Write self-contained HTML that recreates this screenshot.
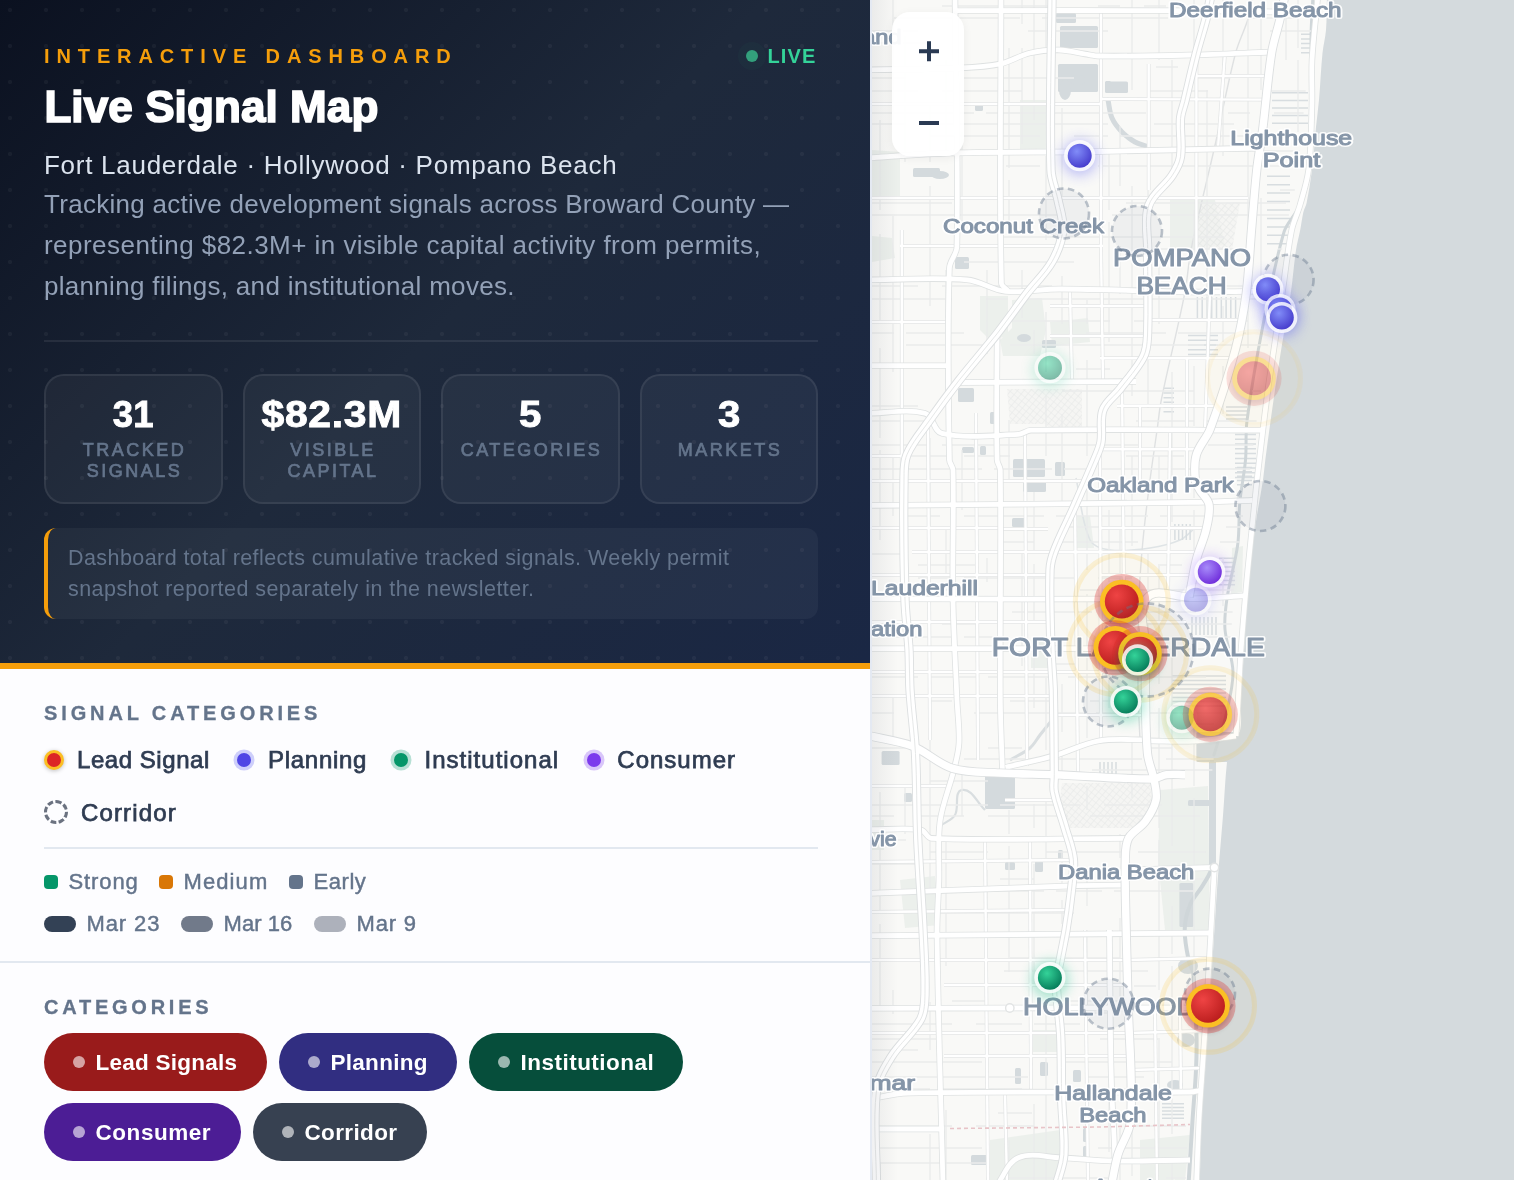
<!DOCTYPE html>
<html lang="en">
<head>
<meta charset="utf-8">
<title>Live Signal Map</title>
<style>
*{box-sizing:border-box;margin:0;padding:0}
html,body{width:1514px;height:1180px;overflow:hidden;background:#fff}
body{font-family:"Liberation Sans",sans-serif;position:relative;-webkit-font-smoothing:antialiased}
.abs{position:absolute;white-space:nowrap}
#hero{will-change:transform;position:absolute;left:0;top:0;width:870px;height:663px;background:linear-gradient(135deg,#0b1120 0%,#1e293b 50%,#1a2744 100%);overflow:hidden}
#hero .dots{position:absolute;inset:0;background-image:radial-gradient(circle,rgba(255,255,255,.045) 0,rgba(255,255,255,.045) 1.7px,transparent 2.5px);background-size:36px 36px;background-position:-8px -8px}
#bar{position:absolute;left:0;top:663px;width:870px;height:6px;background:#f59e0b}
#white{will-change:transform;position:absolute;left:0;top:669px;width:870px;height:511px;background:#fdfdff}
#sep{position:absolute;left:870px;top:0;width:2px;height:1180px;background:#e4e9f2}
#map{will-change:transform;position:absolute;left:872px;top:0;width:642px;height:1180px;background:#f8f8f6;overflow:hidden}

.eyebrow{left:44px;top:43px;font-size:20px;line-height:26px;font-weight:700;color:#f59e0b;letter-spacing:6.1px}
.live{left:767.5px;top:43px;font-size:20px;line-height:26px;font-weight:700;color:#34d399;letter-spacing:1.1px}
.livedot{position:absolute;left:746px;top:50px;width:12px;height:12px;border-radius:50%;background:#33a07c;box-shadow:0 0 0 8px rgba(52,211,153,.035)}
h1{left:44.4px;-webkit-text-stroke:1.7px #fff;top:81px;font-size:44px;line-height:52px;font-weight:700;color:#fff;letter-spacing:-1.6px}
.sub{left:44px;top:149px;font-size:26px;line-height:32px;color:#dbe3ee;letter-spacing:.2px}
.para{left:44px;font-size:26px;line-height:32px;color:#93a1b7;letter-spacing:.35px}
.hr1{position:absolute;left:44px;top:340px;width:774px;height:2px;background:rgba(255,255,255,.08)}
.card{position:absolute;top:374px;width:178.5px;height:129.5px;border-radius:20px;border:2px solid rgba(255,255,255,.075);background:rgba(255,255,255,.045);text-align:center}
.card b{display:block;margin-top:18px;font-size:36.5px;line-height:42px;font-weight:700;color:#fff;letter-spacing:.2px;-webkit-text-stroke:.9px #fff}
.card b i{display:inline-block;font-style:normal;transform-origin:50% 50%}
.card span{display:block;margin-top:3.5px;font-size:18px;line-height:21px;color:#64748b;font-weight:400;-webkit-text-stroke:.7px #64748b}
.card u{display:block;text-decoration:none;letter-spacing:2.5px;padding-left:2.5px}
.note{position:absolute;left:44px;top:528px;width:774px;height:91px;border-radius:12px;background:rgba(255,255,255,.045);border-left:4px solid #f59e0b;}
.note div{position:absolute;left:20px;font-size:21.5px;line-height:31px;color:#64748b;white-space:nowrap;letter-spacing:.25px}

.sec{font-size:20px;line-height:26px;font-weight:700;color:#64748b;-webkit-text-stroke:.3px #64748b;letter-spacing:4.6px}
.lg{font-size:24px;line-height:30px;font-weight:400;color:#2f3c52;-webkit-text-stroke:.75px #2f3c52;letter-spacing:.1px}
.dot{position:absolute;border-radius:50%}
.sm{-webkit-text-stroke:.45px #64748b;font-size:22px;line-height:28px;color:#64748b;font-weight:400;letter-spacing:.2px}
.sq{position:absolute;width:14px;height:14px;border-radius:4px;top:206px}
.dp{position:absolute;width:32px;height:16px;border-radius:8px;top:247px}
.hr2{position:absolute;left:44px;top:178px;width:774px;height:2px;background:#e2e8f0}
.hr3{position:absolute;left:0;top:292px;width:870px;height:2px;background:#e2e8f0}
.pill{position:absolute;height:58px;border-radius:29px;color:#fff;font-size:22.5px;font-weight:700;line-height:58px;white-space:nowrap}
.pill i{position:absolute;left:29px;top:23px;width:12px;height:12px;border-radius:50%;background:rgba(255,255,255,.6)}
.pill span{position:absolute;left:51.5px;top:.7px;letter-spacing:.1px}
</style>
</head>
<body>
<div id="hero"><div class="dots"></div>
  <div class="abs eyebrow" id="h_eye" style="letter-spacing:6.89px">INTERACTIVE DASHBOARD</div>
  <div class="livedot"></div><div class="abs live" id="h_live">LIVE</div>
  <h1 class="abs" id="h_title" style="letter-spacing:0.1px">Live Signal Map</h1>
  <div class="abs sub" id="h_sub" style="letter-spacing:0.73px">Fort Lauderdale · Hollywood · Pompano Beach</div>
  <div class="abs para" id="h_p1" style="letter-spacing:0.28px;top:188px">Tracking active development signals across Broward County —</div>
  <div class="abs para" id="h_p2" style="letter-spacing:0.46px;top:229px">representing $82.3M+ in visible capital activity from permits,</div>
  <div class="abs para" id="h_p3" style="letter-spacing:0.3px;top:270px">planning filings, and institutional moves.</div>
  <div class="hr1"></div>
  <div class="card" style="left:44px"><b><i id="n1">31</i></b><span><u id="c1a">TRACKED</u><u id="c1b">SIGNALS</u></span></div>
  <div class="card" style="left:242.5px"><b><i id="n2" style="transform:scaleX(1.12);letter-spacing:.6px">$82.3M</i></b><span><u id="c2a">VISIBLE</u><u id="c2b">CAPITAL</u></span></div>
  <div class="card" style="left:441px"><b><i id="n3" style="transform:scaleX(1.1)">5</i></b><span><u id="c3a">CATEGORIES</u></span></div>
  <div class="card" style="left:639.5px"><b><i id="n4" style="transform:scaleX(1.1)">3</i></b><span><u id="c4a">MARKETS</u></span></div>
  <div class="note"><div id="h_n1" style="letter-spacing:0.43px;top:15px">Dashboard total reflects cumulative tracked signals. Weekly permit</div><div id="h_n2" style="letter-spacing:0.44px;top:46px">snapshot reported separately in the newsletter.</div></div>
</div>
<div id="bar"></div>
<div id="white">

  <div class="abs sec" id="t_sigcat" style="letter-spacing:3.87px;left:44px;top:31px">SIGNAL CATEGORIES</div>
  <div class="dot" style="left:44px;top:81px;width:20px;height:20px;background:#dc2626;border:3px solid #fbbf24;box-shadow:0 1px 4px rgba(0,0,0,.25)"></div>
  <div class="abs lg" id="t_lead" style="letter-spacing:0.55px;left:77px;top:76px">Lead Signal</div>
  <div class="dot" style="left:237px;top:84px;width:14px;height:14px;background:#4f46e5;box-shadow:0 0 0 3.5px rgba(99,102,241,.3)"></div>
  <div class="abs lg" id="t_plan" style="letter-spacing:0.72px;left:268px;top:76px">Planning</div>
  <div class="dot" style="left:394px;top:84px;width:14px;height:14px;background:#059669;box-shadow:0 0 0 3.5px rgba(5,150,105,.28)"></div>
  <div class="abs lg" id="t_inst" style="letter-spacing:1.02px;left:424.5px;top:76px">Institutional</div>
  <div class="dot" style="left:587px;top:84px;width:14px;height:14px;background:#7c3aed;box-shadow:0 0 0 3.5px rgba(124,58,237,.28)"></div>
  <div class="abs lg" id="t_cons" style="letter-spacing:1px;left:617.3px;top:76px">Consumer</div>
  <div class="dot" style="left:44px;top:131px;width:24px;height:24px;border:3px dashed #6b7280;background:transparent"></div>
  <div class="abs lg" id="t_corr" style="letter-spacing:1.15px;left:81px;top:129px">Corridor</div>
  <div class="hr2"></div>
  <div class="sq" style="left:44px;background:#059669"></div><div class="abs sm" id="t_strong" style="letter-spacing:0.9px;left:68.5px;top:199px">Strong</div>
  <div class="sq" style="left:159px;background:#d97706"></div><div class="abs sm" id="t_medium" style="letter-spacing:1.1px;left:183.5px;top:199px">Medium</div>
  <div class="sq" style="left:289px;background:#64748b"></div><div class="abs sm" id="t_early" style="letter-spacing:0.55px;left:313.5px;top:199px">Early</div>
  <div class="dp" style="left:44px;background:#334155"></div><div class="abs sm" id="t_m23" style="letter-spacing:0.9px;left:86.5px;top:241px">Mar 23</div>
  <div class="dp" style="left:181px;background:#717a8a"></div><div class="abs sm" id="t_m16" style="letter-spacing:0.07px;left:223.5px;top:241px">Mar 16</div>
  <div class="dp" style="left:314px;background:#adb1bb"></div><div class="abs sm" id="t_m9" style="letter-spacing:0.8px;left:356.5px;top:241px">Mar 9</div>
  <div class="hr3"></div>
  <div class="abs sec" id="t_cat" style="letter-spacing:3.76px;left:44px;top:325px">CATEGORIES</div>
  <div class="pill" style="left:44px;top:364px;width:223px;background:#991b1b"><i></i><span id="p_lead" style="letter-spacing:0.24px">Lead Signals</span></div>
  <div class="pill" style="left:279px;top:364px;width:178px;background:#312e81"><i></i><span id="p_plan" style="letter-spacing:0.28px">Planning</span></div>
  <div class="pill" style="left:469px;top:364px;width:214px;background:#064e3b"><i></i><span id="p_inst" style="letter-spacing:0.48px">Institutional</span></div>
  <div class="pill" style="left:44px;top:434px;width:197px;background:#4c1d95"><i></i><span id="p_cons" style="letter-spacing:0.55px">Consumer</span></div>
  <div class="pill" style="left:253px;top:434px;width:174px;background:#374151"><i></i><span id="p_corr" style="letter-spacing:0.37px">Corridor</span></div>

</div>
<div id="sep"></div>
<div id="map">
<svg width="642" height="1180" viewBox="872 0 642 1180" style="position:absolute;left:0;top:0">
<defs>
<radialGradient id="gR" cx="35%" cy="32%" r="75%"><stop offset="0" stop-color="#ef4444"/><stop offset="1" stop-color="#b91c1c"/></radialGradient>
<radialGradient id="gP" cx="38%" cy="32%" r="75%"><stop offset="0" stop-color="#818cf8"/><stop offset="1" stop-color="#4338ca"/></radialGradient>
<radialGradient id="gG" cx="38%" cy="32%" r="75%"><stop offset="0" stop-color="#34d399"/><stop offset="1" stop-color="#047857"/></radialGradient>
<radialGradient id="gC" cx="38%" cy="32%" r="75%"><stop offset="0" stop-color="#a78bfa"/><stop offset="1" stop-color="#6d28d9"/></radialGradient>
<filter id="sh" x="-50%" y="-50%" width="200%" height="200%"><feGaussianBlur stdDeviation="3"/></filter>
<filter id="gl" x="-100%" y="-100%" width="300%" height="300%"><feGaussianBlur stdDeviation="7"/></filter>
<pattern id="apt" width="5" height="5" patternUnits="userSpaceOnUse" patternTransform="rotate(40)"><rect width="5" height="5" fill="#f3f3f1"/><path d="M0 0H5M0 0V5" stroke="#dddfe0" stroke-width="1.2"/></pattern>
</defs>
<rect x="872" y="0" width="642" height="1180" fill="#f9f9f7"/>
<path d="M1327 -5 C1326.7 6.7 1326.9 18.4 1326 30 C1325.4 37.7 1323.3 45.3 1322.5 53 C1320.9 68.6 1320.4 84.4 1319 100 C1318.2 109.0 1316.9 118.0 1316 127 C1314.6 141.3 1313.8 155.7 1312 170 C1310.6 181.1 1308.8 192.1 1306.6 203 C1306.0 206.1 1304.1 208.9 1303.4 212 C1302.0 217.9 1301.4 224.0 1300.2 230 C1298.9 236.7 1297.0 243.3 1296 250 C1293.8 264.5 1292.9 279.1 1290.7 293.6 C1287.5 314.8 1283.3 335.8 1280 357 C1276.6 378.2 1273.6 399.5 1270.6 420.7 C1268.7 433.8 1267.0 446.9 1265.3 460 C1264.4 466.7 1264.0 473.4 1263 480 C1260.8 494.6 1257.7 509.0 1255.7 523.6 C1252.8 544.7 1250.3 565.8 1248.3 587 C1246.3 608.2 1245.4 629.5 1244 650.7 C1242.9 667.1 1241.8 683.6 1241 700 C1240.4 710.7 1242.2 721.6 1239.8 732 C1238.7 736.8 1232.9 739.4 1231 744 C1228.6 749.7 1227.7 755.9 1227 762 C1225.0 780.3 1224.4 798.7 1222.9 817 C1221.2 838.2 1219.2 859.5 1217.6 880.7 C1216.4 897.1 1215.5 913.6 1214.4 930 C1213.0 951.2 1211.6 972.4 1210.2 993.6 C1208.8 1014.7 1207.4 1035.9 1206 1057 C1204.6 1078.2 1202.8 1099.4 1201.7 1120.7 C1200.6 1142.1 1200.3 1163.6 1199.6 1185 L1520 1185 L1520 -5Z" fill="#d4dadd"/>
<path d="M980 296 L1008 296 L1008 336 L990 340 L980 330Z" fill="#ecf0ec"/>
<path d="M1012 300 L1042 298 L1046 330 L1040 356 L1003 356 L1000 340 L1012 328Z" fill="#ecf0ec"/>
<path d="M1050 322 L1088 318 L1090 342 L1052 346Z" fill="#ecf0ec"/>
<path d="M872 236 L892 238 L895 258 L872 262Z" fill="#ecf0ec"/>
<path d="M1232 548 L1243 546 L1242 592 L1231 594Z" fill="#ecf0ec"/>
<path d="M1160 790 L1208 786 L1210 930 L1165 930 L1158 860Z" fill="#ecf0ec"/>
<path d="M1033 1030 L1058 1030 L1058 1052 L1033 1052Z" fill="#ecf0ec"/>
<path d="M872 820 L884 820 L884 850 L872 850Z" fill="#ecf0ec"/>
<path d="M900 880 L935 876 L940 925 L905 928Z" fill="#ecf0ec"/>
<path d="M1031 640 L1048 640 L1048 668 L1031 668Z" fill="#ecf0ec"/>
<path d="M1075 516 L1090 516 L1094 548 L1075 548Z" fill="#ecf0ec"/>
<path d="M1020 100 L1050 100 L1050 150 L1020 150Z" fill="#ecf0ec"/>
<path d="M872 150 L900 152 L900 200 L872 200Z" fill="#ecf0ec"/>
<path d="M1170 200 L1215 200 L1225 245 L1170 250Z" fill="#ecf0ec"/>
<path d="M990 1140 L1060 1130 L1060 1180 L990 1180Z" fill="#ecf0ec"/>
<path d="M1140 1140 L1190 1135 L1185 1180 L1140 1180Z" fill="#ecf0ec"/>
<rect x="1013" y="459" width="32" height="18" rx="1.5" fill="#d4dadd"/>
<rect x="1023" y="481" width="23" height="11" rx="1.5" fill="#d4dadd"/>
<rect x="1012" y="518" width="14" height="9" rx="1.5" fill="#d4dadd"/>
<rect x="1056" y="13" width="20" height="10" rx="1.5" fill="#d4dadd"/>
<rect x="1060" y="26" width="38" height="22" rx="1.5" fill="#d4dadd"/>
<rect x="1058" y="64" width="40" height="28" rx="1.5" fill="#d4dadd"/>
<rect x="1105" y="81.5" width="23" height="11.5" rx="1.5" fill="#d4dadd"/>
<rect x="985" y="775" width="30" height="34" rx="1.5" fill="#d4dadd"/>
<rect x="881.6" y="751" width="18" height="14" rx="1.5" fill="#d4dadd"/>
<rect x="904" y="793" width="8" height="9" rx="1.5" fill="#d4dadd"/>
<rect x="1196.4" y="732" width="44" height="30" rx="1.5" fill="#d4dadd"/>
<rect x="1188" y="800" width="22" height="6" rx="1.5" fill="#d4dadd"/>
<rect x="1179.4" y="883" width="14" height="44" rx="1.5" fill="#d4dadd"/>
<rect x="975" y="104" width="8" height="7" rx="1.5" fill="#d4dadd"/>
<rect x="981" y="63" width="8" height="5" rx="1.5" fill="#d4dadd"/>
<rect x="913" y="168" width="27" height="9" rx="1.5" fill="#d4dadd"/>
<rect x="955" y="257" width="14" height="12" rx="1.5" fill="#d4dadd"/>
<rect x="1042" y="340" width="14" height="8" rx="1.5" fill="#d4dadd"/>
<rect x="958" y="388" width="16" height="14" rx="1.5" fill="#d4dadd"/>
<rect x="990" y="412" width="6" height="12" rx="1.5" fill="#d4dadd"/>
<rect x="962" y="447" width="12" height="6" rx="1.5" fill="#d4dadd"/>
<rect x="980" y="446" width="6" height="9" rx="1.5" fill="#d4dadd"/>
<rect x="994" y="447" width="5" height="8" rx="1.5" fill="#d4dadd"/>
<rect x="1055" y="462" width="10" height="14" rx="1.5" fill="#d4dadd"/>
<rect x="1105" y="81" width="6" height="6" rx="1.5" fill="#d4dadd"/>
<rect x="1073" y="1070" width="8" height="12" rx="1.5" fill="#d4dadd"/>
<rect x="1040" y="1062" width="8" height="14" rx="1.5" fill="#d4dadd"/>
<rect x="1015" y="1068" width="6" height="16" rx="1.5" fill="#d4dadd"/>
<rect x="971" y="1155" width="18" height="10" rx="1.5" fill="#d4dadd"/>
<rect x="1083" y="1128" width="6" height="14" rx="1.5" fill="#d4dadd"/>
<rect x="1035" y="860" width="8" height="12" rx="1.5" fill="#d4dadd"/>
<rect x="1005" y="862" width="10" height="8" rx="1.5" fill="#d4dadd"/>
<rect x="1083" y="1146" width="6" height="14" rx="1.5" fill="#d4dadd"/>
<rect x="1058" y="850" width="5" height="12" rx="1.5" fill="#d4dadd"/>
<path d="M1108 100 C1109.3 106.0 1109.5 112.4 1112 118 C1114.3 123.3 1118.0 127.9 1122 132 C1125.8 135.9 1130.3 139.2 1135 142 C1138.4 144.0 1142.3 144.7 1146 146" fill="none" stroke="#d4dadd" stroke-width="5" stroke-linecap="round"/>
<path d="M1076 478 C1080.7 498.7 1081.0 520.8 1090 540 C1093.2 546.7 1102.6 549.0 1110 550 C1123.2 551.8 1136.8 549.9 1150 548 C1160.2 546.5 1170.5 544.2 1180 540 C1185.9 537.4 1190.0 532.0 1195 528" fill="none" stroke="#dfe4e6" stroke-width="1.6"/>
<path d="M985 810 C977.3 803.3 972.0 788.3 962 790 C953.5 791.4 959.5 807.6 955 815 C951.8 820.3 945.0 822.3 940 826" fill="none" stroke="#d9dee0" stroke-width="2.2"/>
<path d="M1010 760 C1016.7 756.0 1024.0 753.0 1030 748 C1034.2 744.5 1036.6 739.3 1040 735 C1044.0 730.0 1048.0 725.0 1052 720" fill="none" stroke="#d9dee0" stroke-width="3"/>
<path d="M1007 389H1082V429H1050L1046 424H1010Z" fill="url(#apt)" opacity=".65"/>
<path d="M1062 783H1150L1152 800L1140 828H1070L1060 800Z" fill="url(#apt)" opacity=".65"/>
<path d="M1200 204L1240 202L1232 250H1196Z" fill="url(#apt)" opacity=".7"/>
<path d="M1301 34.3H1311M1301 38.9H1311M1301 43.5H1311M1301 48.1H1311M1301 52.7H1311M1272 92.8H1308M1272 100.4H1308M1272 108.0H1308M1272 115.6H1308M1272 123.2H1308M1267 176.2H1290M1267 184.7H1290M1267 193.1H1290M1267 201.6H1290M1267 210.0H1290M1267 218.4H1290M1267 226.9H1290M1267 235.3H1290M1267 243.8H1290M1197.4 297V318M1202.2 297V318M1206.9 297V318M1211.7 297V318M1216.5 297V318M1221.3 297V318M1226.1 297V318M1230.8 297V318M1235.6 297V318M1188 335.4H1218M1188 340.2H1218M1188 345.0H1218M1188 349.8H1218M1188 354.6H1218M1163.5 388.3H1174M1163.5 393.0H1174M1163.5 397.7H1174M1163.5 402.3H1174M1163.5 407.0H1174M1163.5 411.7H1174M1226 407.0H1247M1226 411.0H1247M1226 415.0H1247M1226 419.0H1247M1235 434.4H1256M1235 439.2H1256M1235 444.0H1256M1235 448.8H1256M1235 453.6H1256M1235 458.4H1256M1235 463.2H1256M1235 468.0H1256M1235 472.8H1256M1235 477.6H1256M1237 463.2H1252M1237 467.5H1252M1237 471.8H1252M1237 476.2H1252M1237 480.5H1252M1237 484.8H1252M1174.9 524V540M1178.7 524V540M1182.5 524V540M1186.3 524V540M1190.1 524V540M1219 558.2H1235M1219 562.6H1235M1219 567.1H1235M1219 571.5H1235M1219 575.9H1235M1219 580.4H1235M1219 584.8H1235M1192.0 617V635M1196.0 617V635M1200.0 617V635M1204.0 617V635M1208.0 617V635M1212.0 617V635M1216.0 617V635M1172 676.1H1226M1172 680.4H1226M1172 684.6H1226M1172 688.9H1226M1172 693.1H1226M1172 697.4H1226M1172 701.6H1226M1172 705.9H1226M1162 1103.8H1184M1162 1107.4H1184M1162 1111.0H1184M1162 1114.6H1184M1162 1118.2H1184M1100.0 762V775M1104.0 762V775M1108.0 762V775M1112.0 762V775M1116.0 762V775" fill="none" stroke="#d8dde0" stroke-width="1.5"/>
<ellipse cx="1188" cy="966" rx="10" ry="8" fill="#d4dadd"/>
<ellipse cx="1186" cy="1040" rx="9" ry="7" fill="#d4dadd"/>
<ellipse cx="1175" cy="1085" rx="8" ry="5" fill="#d4dadd"/>
<ellipse cx="1065" cy="90" rx="6" ry="10" fill="#d4dadd"/>
<ellipse cx="1078" cy="80" rx="8" ry="5" fill="#d4dadd"/>
<ellipse cx="940" cy="175" rx="9" ry="4" fill="#d4dadd"/>
<ellipse cx="1024" cy="338" rx="7" ry="4" fill="#d4dadd"/>
<path d="M1313 -5 C1312.3 10.0 1311.0 25.0 1311 40 C1311.0 60.0 1313.0 80.0 1313 100 C1313.0 116.7 1312.4 133.4 1311 150 C1310.0 161.7 1308.2 173.4 1306 185 C1304.2 194.1 1301.3 203.0 1299 212" fill="none" stroke="#cfd6d9" stroke-width="3" stroke-linecap="round"/>
<path d="M1296 212 C1292.0 218.7 1286.2 224.5 1284 232 C1275.1 262.5 1269.1 293.8 1263 325 C1256.8 356.7 1251.2 388.6 1247 420.7 C1245.3 433.7 1246.7 446.9 1245.5 460 C1244.2 474.2 1241.1 488.2 1239.8 502.4 C1238.5 516.5 1239.6 530.7 1237.7 544.7 C1235.3 562.6 1229.8 579.9 1227.1 597.7 C1225.5 608.2 1224.2 618.9 1225 629.5 C1226.1 643.8 1232.8 657.5 1233 671.9 C1233.2 686.5 1229.2 700.8 1226 715 C1222.9 728.6 1218.0 741.7 1214 755" fill="none" stroke="#cfd6d9" stroke-width="3" stroke-linecap="round"/>
<path d="M1212 760 C1212.0 795.3 1214.5 830.8 1212 866 C1211.5 873.0 1206.4 878.9 1203 885 C1199.1 891.9 1193.0 897.6 1190 905 C1186.8 912.9 1184.8 921.5 1184.7 930 C1184.5 940.7 1186.9 951.3 1189 961.8 C1189.7 965.5 1192.8 968.6 1193.2 972.4 C1195.3 993.5 1195.9 1014.8 1196.5 1036 C1196.8 1047.3 1196.5 1058.7 1196 1070 C1195.2 1086.9 1193.6 1103.8 1192.5 1120.7 C1191.1 1142.1 1189.8 1163.6 1188.5 1185" fill="none" stroke="#cfd6d9" stroke-width="4" stroke-linecap="round"/>
<rect x="1209" y="762" width="7" height="104" fill="#d4dadd"/>
<path d="M1253 -5 C1251.3 3.0 1250.3 11.2 1248 19 C1244.5 30.6 1238.6 41.3 1235.6 53 C1227.4 84.4 1221.6 116.4 1214.4 148 C1206.7 182.0 1198.0 215.8 1191 250 C1188.1 264.4 1187.6 279.2 1184.7 293.6 C1177.7 329.1 1168.6 364.1 1161.4 399.5 C1159.4 409.2 1158.6 419.2 1157.2 429 C1154.8 446.0 1152.2 463.0 1150 480 C1147.4 500.0 1144.9 520.0 1143 540 C1141.2 559.3 1139.6 578.6 1139 598 C1138.0 628.7 1137.8 659.3 1138 690 C1138.1 706.7 1139.3 723.3 1140 740" fill="none" stroke="#dfe1e2" stroke-width="1.4"/>
<path d="M942 6H1052M1098 6H1120M1144 6H1166M894 18H940M940 18H1020M1042 18H1088M1088 18H1168M1250 18H1296M872 31H918M1028 31H1108M1270 31H1311.85M872 43H930M872 67H982M1156 67H1178M872 78H906M964 78H1074M1196 78H1230M872 91H918M942 91H1022M1150 91H1208M1266 91H1300M1300 91H1305.67M872 113H894M894 113H974M986 113H1066M1066 113H1146M1228 113H1250M1274 113H1303.56M872 124H906M918 124H1028M1028 124H1108M1154 124H1234M930 136H1040M1074 136H1108M1120 136H1230M1230 136H1276M994 151H1016M1016 151H1074M1202 151H1299.77M1006 166H1040M1098 166H1156M1156 166H1266M1266 166H1288M1280 190H1294.73M872 203H952M1126 203H1206M1206 203H1286M872 215H952M952 215H986M986 215H1066M1112 215H1146M1146 215H1168M1168 215H1190M1190 215H1288.87M998 237H1056M1056 237H1114M1114 237H1224M1144 249H1254M1278 249H1282.21M964 262H1074M1188 262H1210M872 286H918M942 286H1052M1212 286H1234M1234 286H1277.62M872 299H952M986 299H1008M1020 299H1130M1130 299H1176M1176 299H1222M1222 299H1268M1268 299H1275.79M872 321H930M1000 321H1110M1134 321H1214M1214 321H1248M872 333H894M906 333H964M1086 333H1166M1178 333H1200M1200 333H1246M906 345H940M940 345H986M1010 345H1056M1056 345H1090M1090 345H1112M1112 345H1146M1146 345H1204M1216 345H1268.03M1076 369H1110M1062 391H1084M1084 391H1194M1252 391H1260.98M872 406H918M872 421H930M1136 421H1194M1206 421H1256.56M872 445H930M942 445H1000M1000 445H1080M1080 445H1138M1208 445H1253.32M872 456H952M964 456H1010M1126 456H1184M872 469H982M994 469H1052M1064 469H1086M1098 469H1156M1156 469H1250.26M872 482H918M942 482H1022M1104 482H1126M1248 482H1248.67M872 505H952M976 505H1034M906 516H940M964 516H1044M1056 516H1114M1114 516H1148M1160 516H1240M1240 516H1242.97M1064 527H1122M1122 527H1180M1226 527H1241.3M1000 542H1034M1058 542H1138M1220 542H1239.55M872 554H906M918 565H976M1160 565H1182M918 578H952M964 578H1074M1098 578H1132M942 590H976M1080 590H1160M1160 590H1218M1218 590H1234.1M872 601H906M906 601H964M964 601H998M1010 601H1120M1120 601H1154M1012 612H1046M1046 612H1092M1138 612H1196M1208 612H1232.61M942 624H976M1132 624H1190M1190 624H1212M1212 624H1231.8M872 637H952M964 637H1010M1196 637H1230.92M1132 649H1212M1212 649H1230.11M1056 664H1078M1102 664H1136M872 677H918M930 677H976M988 677H1022M1022 677H1056M1068 677H1148M1148 677H1206M930 701H952M1010 701H1056M1090 701H1112M1204 701H1226.96M872 713H894M974 713H1084M1096 713H1118M1142 713H1222M1192 724H1214M1226 724H1226.1M872 748H906M988 748H1022M1150 748H1172M964 759H1074M1074 759H1120M1120 759H1142M1166 759H1200M1200 759H1213.67M1092 770H1172M1172 770H1212.4M930 781H988M872 805H930M930 805H988M1000 805H1058M1058 805H1080M1104 805H1162M872 816H894M918 816H964M988 816H1068M1090 816H1200M872 840H906M986 840H1020M930 852H988M1046 852H1092M1092 852H1126M1138 852H1205.99M872 864H918M1000 879H1034M1150 879H1203.74M872 891H906M930 891H988M988 891H1022M1022 891H1044M1056 891H1102M1114 891H1194M872 913H906M930 913H964M964 913H1074M1032 935H1066M1066 935H1088M1088 935H1122M1146 935H1200.07M1010 958H1120M1004 971H1038M1038 971H1148M1134 986H1156M952 1001H986M1054 1001H1076M1076 1001H1186M1062 1013H1096M1096 1013H1118M872 1024H906M906 1024H952M976 1024H1022M1034 1024H1080M872 1039H894M894 1039H940M1100 1039H1158M872 1050H918M872 1062H982M1062 1062H1172M872 1077H982M982 1077H1028M1086 1077H1144M872 1089H930M942 1089H1022M1092 1089H1172M998 1113H1032M1112 1113H1146M872 1126H906M906 1126H952M976 1126H1034M1128 1126H1186M872 1148H982M1098 1148H1186.81M872 1163H930M930 1163H988M998 1178H1108M1166 1178H1185.83M880 120V210M880 234V324M880 348V438M880 450V540M880 792V912M880 924V984M880 984V1008M880 1164V1180M893 0V120M893 216V336M893 336V372M893 456V516M893 696V744M893 990V1014M905 36V126M905 126V162M905 552V642M905 786V834M930 102V162M930 186V306M930 438V528M930 588V624M930 648V768M930 768V888M930 1002V1050M930 1134V1180M946 60V150M946 270V318M946 366V390M946 528V576M946 840V930M946 930V966M946 1110V1180M962 132V180M962 180V228M962 450V510M962 768V792M962 792V816M987 270V294M987 294V354M987 558V582M987 870V918M987 1068V1158M987 1158V1180M1009 48V168M1009 180V228M1009 420V480M1009 810V834M1009 846V936M1009 936V972M1009 1140V1176M1022 0V24M1022 48V72M1022 72V120M1022 120V144M1022 270V318M1022 552V576M1022 576V666M1034 0V120M1034 330V354M1034 492V552M1034 564V624M1034 648V708M1034 804V828M1034 864V984M1034 1104V1152M1034 1152V1180M1046 0V48M1046 156V216M1046 216V240M1046 312V372M1046 396V456M1046 678V702M1046 702V750M1046 798V858M1046 1002V1092M1046 1092V1180M1062 108V228M1062 276V324M1062 414V504M1062 684V732M1062 756V780M1062 852V888M1062 900V924M1062 1098V1180M1087 300V324M1087 360V384M1087 384V408M1087 408V456M1087 480V570M1087 594V618M1087 618V738M1087 786V810M1087 870V906M1087 930V1050M1087 1050V1170M1109 150V210M1109 222V342M1109 510V558M1109 558V582M1109 672V708M1109 948V1038M1109 1038V1128M1109 1128V1152M1120 126V186M1120 246V294M1120 528V648M1120 834V858M1120 918V1008M1120 1128V1176M1120 1176V1180M1132 0V90M1132 186V246M1132 246V336M1132 336V396M1132 456V546M1132 738V798M1132 1056V1176M1148 114V234M1148 258V318M1148 318V408M1148 552V600M1148 624V648M1159 0V60M1159 264V324M1159 456V492M1159 564V684M1159 708V828M1159 840V930M1159 930V990M1159 1038V1158M1172 60V180M1172 372V462M1172 462V498M1172 498V522M1172 636V726M1172 726V846M1172 906V954M1172 966V1086M1172 1086V1134M1172 1158V1180M1194 0V24M1194 24V60M1194 210V258M1194 366V426M1194 474V498M1194 510V570M1194 714V762M1194 762V786M1194 798V888M1194 888V948M1194 948V1008M1207 90V180M1207 180V216M1207 216V336M1223 0V120M1223 120V156M1223 306V342M1223 366V414M1223 558V606M1248 0V120M1248 120V210M1248 210V258M1248 258V348M1261 0V90M1261 198V288M1286 0V60M1298 0V48M1298 60V108M1298 108V132" fill="none" stroke="#eaebeb" stroke-width="1.3"/>
<path d="M1101 10 L1101 250" fill="none" stroke="#e3e5e5" stroke-width="3.8" stroke-linejoin="round"/>
<path d="M1000 104 L1100 104" fill="none" stroke="#e3e5e5" stroke-width="3.8" stroke-linejoin="round"/>
<path d="M1100 99 L1265 99.6" fill="none" stroke="#e3e5e5" stroke-width="3.8" stroke-linejoin="round"/>
<path d="M1000 198 L1248 198" fill="none" stroke="#e3e5e5" stroke-width="3.8" stroke-linejoin="round"/>
<path d="M1196.4 53 L1196.4 250" fill="none" stroke="#e3e5e5" stroke-width="3.8" stroke-linejoin="round"/>
<path d="M1148.7 64 L1148.7 190" fill="none" stroke="#e3e5e5" stroke-width="3.8" stroke-linejoin="round"/>
<path d="M1196 76 L1267 76" fill="none" stroke="#e3e5e5" stroke-width="3.8" stroke-linejoin="round"/>
<path d="M900 245.9 L1103 245.9" fill="none" stroke="#e3e5e5" stroke-width="3.8" stroke-linejoin="round"/>
<path d="M901.8 230 L901.8 480" fill="none" stroke="#e3e5e5" stroke-width="3.8" stroke-linejoin="round"/>
<path d="M1100 358.2 L1235.6 358.2" fill="none" stroke="#e3e5e5" stroke-width="3.8" stroke-linejoin="round"/>
<path d="M1117 405.8 L1218 405.8" fill="none" stroke="#e3e5e5" stroke-width="3.8" stroke-linejoin="round"/>
<path d="M1100 449.3 L1195 449.3" fill="none" stroke="#e3e5e5" stroke-width="3.8" stroke-linejoin="round"/>
<path d="M1186.9 358 L1186.9 480" fill="none" stroke="#e3e5e5" stroke-width="3.8" stroke-linejoin="round"/>
<path d="M1140 406 L1140 480" fill="none" stroke="#e3e5e5" stroke-width="3.8" stroke-linejoin="round"/>
<path d="M872 481 L1090 481" fill="none" stroke="#e3e5e5" stroke-width="3.8" stroke-linejoin="round"/>
<path d="M1003 528.9 L1048 528.9" fill="none" stroke="#e3e5e5" stroke-width="3.8" stroke-linejoin="round"/>
<path d="M912 552 L1103 552" fill="none" stroke="#e3e5e5" stroke-width="3.8" stroke-linejoin="round"/>
<path d="M872 696 L1050 696" fill="none" stroke="#e3e5e5" stroke-width="3.8" stroke-linejoin="round"/>
<path d="M1055 552 L1195 552" fill="none" stroke="#e3e5e5" stroke-width="3.8" stroke-linejoin="round"/>
<path d="M1100 528 L1205 528" fill="none" stroke="#e3e5e5" stroke-width="3.8" stroke-linejoin="round"/>
<path d="M1100 575 L1190 575" fill="none" stroke="#e3e5e5" stroke-width="3.8" stroke-linejoin="round"/>
<path d="M1100 622 L1186 622" fill="none" stroke="#e3e5e5" stroke-width="3.8" stroke-linejoin="round"/>
<path d="M1054 672 L1145 672" fill="none" stroke="#e3e5e5" stroke-width="3.8" stroke-linejoin="round"/>
<path d="M944 1056 L1130 1056" fill="none" stroke="#e3e5e5" stroke-width="3.8" stroke-linejoin="round"/>
<path d="M872 960 L1125 960" fill="none" stroke="#e3e5e5" stroke-width="3.8" stroke-linejoin="round"/>
<path d="M944 985 L1128 985" fill="none" stroke="#e3e5e5" stroke-width="3.8" stroke-linejoin="round"/>
<path d="M872 1033 L1128 1033" fill="none" stroke="#e3e5e5" stroke-width="3.8" stroke-linejoin="round"/>
<path d="M1127 960 L1209 958" fill="none" stroke="#e3e5e5" stroke-width="3.8" stroke-linejoin="round"/>
<path d="M1128 1033 L1205 1031" fill="none" stroke="#e3e5e5" stroke-width="3.8" stroke-linejoin="round"/>
<path d="M1130 1070 L1203 1068" fill="none" stroke="#e3e5e5" stroke-width="3.8" stroke-linejoin="round"/>
<path d="M1155 1008 L1157 1185" fill="none" stroke="#e3e5e5" stroke-width="3.8" stroke-linejoin="round"/>
<path d="M1180 1008 L1181 1092" fill="none" stroke="#e3e5e5" stroke-width="3.8" stroke-linejoin="round"/>
<path d="M1085 930 L1088 1185" fill="none" stroke="#e3e5e5" stroke-width="3.8" stroke-linejoin="round"/>
<path d="M1030 838 L1031 1092" fill="none" stroke="#e3e5e5" stroke-width="3.8" stroke-linejoin="round"/>
<path d="M985 838 L988 1185" fill="none" stroke="#e3e5e5" stroke-width="3.8" stroke-linejoin="round"/>
<path d="M872 862 L1070 860" fill="none" stroke="#e3e5e5" stroke-width="3.8" stroke-linejoin="round"/>
<path d="M872 912 L1068 910" fill="none" stroke="#e3e5e5" stroke-width="3.8" stroke-linejoin="round"/>
<path d="M1050 715 L1145 715" fill="none" stroke="#e3e5e5" stroke-width="3.8" stroke-linejoin="round"/>
<path d="M1075 508 L1078 775" fill="none" stroke="#e3e5e5" stroke-width="3.8" stroke-linejoin="round"/>
<path d="M1100 440 L1101 740" fill="none" stroke="#e3e5e5" stroke-width="3.8" stroke-linejoin="round"/>
<path d="M1122 381 L1124 598" fill="none" stroke="#e3e5e5" stroke-width="3.8" stroke-linejoin="round"/>
<path d="M1170 430 L1168 598" fill="none" stroke="#e3e5e5" stroke-width="3.8" stroke-linejoin="round"/>
<path d="M1025 434 L1027 766" fill="none" stroke="#e3e5e5" stroke-width="3.8" stroke-linejoin="round"/>
<path d="M976 413 L978 760" fill="none" stroke="#e3e5e5" stroke-width="3.8" stroke-linejoin="round"/>
<path d="M928 421 L930 740" fill="none" stroke="#e3e5e5" stroke-width="3.8" stroke-linejoin="round"/>
<path d="M872 456 L905 456" fill="none" stroke="#e3e5e5" stroke-width="3.8" stroke-linejoin="round"/>
<path d="M872 528 L1000 528" fill="none" stroke="#e3e5e5" stroke-width="3.8" stroke-linejoin="round"/>
<path d="M872 575 L1050 575" fill="none" stroke="#e3e5e5" stroke-width="3.8" stroke-linejoin="round"/>
<path d="M872 622 L1050 622" fill="none" stroke="#e3e5e5" stroke-width="3.8" stroke-linejoin="round"/>
<path d="M872 672 L1050 672" fill="none" stroke="#e3e5e5" stroke-width="3.8" stroke-linejoin="round"/>
<path d="M872 104 L1000 104" fill="none" stroke="#e3e5e5" stroke-width="3.8" stroke-linejoin="round"/>
<path d="M872 198 L1000 198" fill="none" stroke="#e3e5e5" stroke-width="3.8" stroke-linejoin="round"/>
<path d="M872 322 L949 322" fill="none" stroke="#e3e5e5" stroke-width="3.8" stroke-linejoin="round"/>
<path d="M1050 306 L1147 306" fill="none" stroke="#e3e5e5" stroke-width="3.8" stroke-linejoin="round"/>
<path d="M1050 336 L1147 336" fill="none" stroke="#e3e5e5" stroke-width="3.8" stroke-linejoin="round"/>
<path d="M1150 320 L1240 320" fill="none" stroke="#e3e5e5" stroke-width="3.8" stroke-linejoin="round"/>
<path d="M1210 292 L1205 430" fill="none" stroke="#e3e5e5" stroke-width="3.8" stroke-linejoin="round"/>
<path d="M1225 53 L1218 148" fill="none" stroke="#e3e5e5" stroke-width="3.8" stroke-linejoin="round"/>
<path d="M1101 250 L1103 381" fill="none" stroke="#e3e5e5" stroke-width="3.8" stroke-linejoin="round"/>
<path d="M1070 292 L1072 381" fill="none" stroke="#e3e5e5" stroke-width="3.8" stroke-linejoin="round"/>
<path d="M872 1080 L876 1080" fill="none" stroke="#e3e5e5" stroke-width="3.8" stroke-linejoin="round"/>
<path d="M1005 1092 L1007 1185" fill="none" stroke="#e3e5e5" stroke-width="3.8" stroke-linejoin="round"/>
<path d="M872 786 L950 786" fill="none" stroke="#e3e5e5" stroke-width="3.8" stroke-linejoin="round"/>
<path d="M1005 800 L1056 800" fill="none" stroke="#e3e5e5" stroke-width="3.8" stroke-linejoin="round"/>
<path d="M1101 10 L1101 250" fill="none" stroke="#ffffff" stroke-width="2.4" stroke-linejoin="round"/>
<path d="M1000 104 L1100 104" fill="none" stroke="#ffffff" stroke-width="2.4" stroke-linejoin="round"/>
<path d="M1100 99 L1265 99.6" fill="none" stroke="#ffffff" stroke-width="2.4" stroke-linejoin="round"/>
<path d="M1000 198 L1248 198" fill="none" stroke="#ffffff" stroke-width="2.4" stroke-linejoin="round"/>
<path d="M1196.4 53 L1196.4 250" fill="none" stroke="#ffffff" stroke-width="2.4" stroke-linejoin="round"/>
<path d="M1148.7 64 L1148.7 190" fill="none" stroke="#ffffff" stroke-width="2.4" stroke-linejoin="round"/>
<path d="M1196 76 L1267 76" fill="none" stroke="#ffffff" stroke-width="2.4" stroke-linejoin="round"/>
<path d="M900 245.9 L1103 245.9" fill="none" stroke="#ffffff" stroke-width="2.4" stroke-linejoin="round"/>
<path d="M901.8 230 L901.8 480" fill="none" stroke="#ffffff" stroke-width="2.4" stroke-linejoin="round"/>
<path d="M1100 358.2 L1235.6 358.2" fill="none" stroke="#ffffff" stroke-width="2.4" stroke-linejoin="round"/>
<path d="M1117 405.8 L1218 405.8" fill="none" stroke="#ffffff" stroke-width="2.4" stroke-linejoin="round"/>
<path d="M1100 449.3 L1195 449.3" fill="none" stroke="#ffffff" stroke-width="2.4" stroke-linejoin="round"/>
<path d="M1186.9 358 L1186.9 480" fill="none" stroke="#ffffff" stroke-width="2.4" stroke-linejoin="round"/>
<path d="M1140 406 L1140 480" fill="none" stroke="#ffffff" stroke-width="2.4" stroke-linejoin="round"/>
<path d="M872 481 L1090 481" fill="none" stroke="#ffffff" stroke-width="2.4" stroke-linejoin="round"/>
<path d="M1003 528.9 L1048 528.9" fill="none" stroke="#ffffff" stroke-width="2.4" stroke-linejoin="round"/>
<path d="M912 552 L1103 552" fill="none" stroke="#ffffff" stroke-width="2.4" stroke-linejoin="round"/>
<path d="M872 696 L1050 696" fill="none" stroke="#ffffff" stroke-width="2.4" stroke-linejoin="round"/>
<path d="M1055 552 L1195 552" fill="none" stroke="#ffffff" stroke-width="2.4" stroke-linejoin="round"/>
<path d="M1100 528 L1205 528" fill="none" stroke="#ffffff" stroke-width="2.4" stroke-linejoin="round"/>
<path d="M1100 575 L1190 575" fill="none" stroke="#ffffff" stroke-width="2.4" stroke-linejoin="round"/>
<path d="M1100 622 L1186 622" fill="none" stroke="#ffffff" stroke-width="2.4" stroke-linejoin="round"/>
<path d="M1054 672 L1145 672" fill="none" stroke="#ffffff" stroke-width="2.4" stroke-linejoin="round"/>
<path d="M944 1056 L1130 1056" fill="none" stroke="#ffffff" stroke-width="2.4" stroke-linejoin="round"/>
<path d="M872 960 L1125 960" fill="none" stroke="#ffffff" stroke-width="2.4" stroke-linejoin="round"/>
<path d="M944 985 L1128 985" fill="none" stroke="#ffffff" stroke-width="2.4" stroke-linejoin="round"/>
<path d="M872 1033 L1128 1033" fill="none" stroke="#ffffff" stroke-width="2.4" stroke-linejoin="round"/>
<path d="M1127 960 L1209 958" fill="none" stroke="#ffffff" stroke-width="2.4" stroke-linejoin="round"/>
<path d="M1128 1033 L1205 1031" fill="none" stroke="#ffffff" stroke-width="2.4" stroke-linejoin="round"/>
<path d="M1130 1070 L1203 1068" fill="none" stroke="#ffffff" stroke-width="2.4" stroke-linejoin="round"/>
<path d="M1155 1008 L1157 1185" fill="none" stroke="#ffffff" stroke-width="2.4" stroke-linejoin="round"/>
<path d="M1180 1008 L1181 1092" fill="none" stroke="#ffffff" stroke-width="2.4" stroke-linejoin="round"/>
<path d="M1085 930 L1088 1185" fill="none" stroke="#ffffff" stroke-width="2.4" stroke-linejoin="round"/>
<path d="M1030 838 L1031 1092" fill="none" stroke="#ffffff" stroke-width="2.4" stroke-linejoin="round"/>
<path d="M985 838 L988 1185" fill="none" stroke="#ffffff" stroke-width="2.4" stroke-linejoin="round"/>
<path d="M872 862 L1070 860" fill="none" stroke="#ffffff" stroke-width="2.4" stroke-linejoin="round"/>
<path d="M872 912 L1068 910" fill="none" stroke="#ffffff" stroke-width="2.4" stroke-linejoin="round"/>
<path d="M1050 715 L1145 715" fill="none" stroke="#ffffff" stroke-width="2.4" stroke-linejoin="round"/>
<path d="M1075 508 L1078 775" fill="none" stroke="#ffffff" stroke-width="2.4" stroke-linejoin="round"/>
<path d="M1100 440 L1101 740" fill="none" stroke="#ffffff" stroke-width="2.4" stroke-linejoin="round"/>
<path d="M1122 381 L1124 598" fill="none" stroke="#ffffff" stroke-width="2.4" stroke-linejoin="round"/>
<path d="M1170 430 L1168 598" fill="none" stroke="#ffffff" stroke-width="2.4" stroke-linejoin="round"/>
<path d="M1025 434 L1027 766" fill="none" stroke="#ffffff" stroke-width="2.4" stroke-linejoin="round"/>
<path d="M976 413 L978 760" fill="none" stroke="#ffffff" stroke-width="2.4" stroke-linejoin="round"/>
<path d="M928 421 L930 740" fill="none" stroke="#ffffff" stroke-width="2.4" stroke-linejoin="round"/>
<path d="M872 456 L905 456" fill="none" stroke="#ffffff" stroke-width="2.4" stroke-linejoin="round"/>
<path d="M872 528 L1000 528" fill="none" stroke="#ffffff" stroke-width="2.4" stroke-linejoin="round"/>
<path d="M872 575 L1050 575" fill="none" stroke="#ffffff" stroke-width="2.4" stroke-linejoin="round"/>
<path d="M872 622 L1050 622" fill="none" stroke="#ffffff" stroke-width="2.4" stroke-linejoin="round"/>
<path d="M872 672 L1050 672" fill="none" stroke="#ffffff" stroke-width="2.4" stroke-linejoin="round"/>
<path d="M872 104 L1000 104" fill="none" stroke="#ffffff" stroke-width="2.4" stroke-linejoin="round"/>
<path d="M872 198 L1000 198" fill="none" stroke="#ffffff" stroke-width="2.4" stroke-linejoin="round"/>
<path d="M872 322 L949 322" fill="none" stroke="#ffffff" stroke-width="2.4" stroke-linejoin="round"/>
<path d="M1050 306 L1147 306" fill="none" stroke="#ffffff" stroke-width="2.4" stroke-linejoin="round"/>
<path d="M1050 336 L1147 336" fill="none" stroke="#ffffff" stroke-width="2.4" stroke-linejoin="round"/>
<path d="M1150 320 L1240 320" fill="none" stroke="#ffffff" stroke-width="2.4" stroke-linejoin="round"/>
<path d="M1210 292 L1205 430" fill="none" stroke="#ffffff" stroke-width="2.4" stroke-linejoin="round"/>
<path d="M1225 53 L1218 148" fill="none" stroke="#ffffff" stroke-width="2.4" stroke-linejoin="round"/>
<path d="M1101 250 L1103 381" fill="none" stroke="#ffffff" stroke-width="2.4" stroke-linejoin="round"/>
<path d="M1070 292 L1072 381" fill="none" stroke="#ffffff" stroke-width="2.4" stroke-linejoin="round"/>
<path d="M872 1080 L876 1080" fill="none" stroke="#ffffff" stroke-width="2.4" stroke-linejoin="round"/>
<path d="M1005 1092 L1007 1185" fill="none" stroke="#ffffff" stroke-width="2.4" stroke-linejoin="round"/>
<path d="M872 786 L950 786" fill="none" stroke="#ffffff" stroke-width="2.4" stroke-linejoin="round"/>
<path d="M1005 800 L1056 800" fill="none" stroke="#ffffff" stroke-width="2.4" stroke-linejoin="round"/>
<path d="M1318 -5 C1316.0 16.7 1313.2 38.3 1312 60 C1311.2 75.3 1312.4 90.7 1311.9 106 C1311.3 127.2 1311.2 148.5 1308.7 169.5 C1307.2 181.6 1303.3 193.3 1300 205 C1297.6 213.5 1293.4 221.4 1291.7 230 C1287.5 251.0 1285.4 272.4 1282.2 293.6 C1278.0 321.8 1273.5 350.0 1269.5 378.3 C1267.1 395.2 1265.1 412.1 1263 429 C1260.9 446.0 1258.9 463.0 1257 480 C1255.4 494.5 1254.0 509.1 1252.5 523.6 C1250.4 544.7 1248.1 565.8 1246.2 587 C1244.3 608.2 1242.5 629.4 1241 650.7 C1239.6 670.5 1238.9 690.2 1237.7 710 C1237.2 718.7 1236.6 727.3 1236 736" fill="none" stroke="#dfe2e2" stroke-width="6.4" stroke-linejoin="round"/>
<path d="M1214.4 867.5 C1213.3 888.3 1212.2 909.2 1211 930 C1209.7 953.3 1208.4 976.7 1207 1000 C1205.8 1020.0 1204.3 1040.0 1203 1060 C1201.7 1080.0 1200.0 1100.0 1199 1120 C1197.9 1141.7 1197.3 1163.3 1196.5 1185" fill="none" stroke="#dfe2e2" stroke-width="6.4" stroke-linejoin="round"/>
<path d="M955 10.6 C1033.3 10.6 1111.7 10.3 1190 10.6 C1220.3 10.7 1250.7 11.5 1281 12" fill="none" stroke="#dfe2e2" stroke-width="6.4" stroke-linejoin="round"/>
<path d="M868 70 C898.7 69.3 929.4 69.4 960 68 C973.4 67.4 986.9 66.8 1000 64 C1010.4 61.8 1019.6 55.4 1030 53 C1039.8 50.7 1050.0 49.8 1060 50 C1068.4 50.2 1076.7 52.7 1085 54 C1090.0 54.7 1095.0 56.0 1100 56 C1130.0 56.3 1160.0 55.7 1190 55 C1217.2 54.4 1244.4 53.0 1271.6 52" fill="none" stroke="#dfe2e2" stroke-width="6.4" stroke-linejoin="round"/>
<path d="M868 158 C895.3 156.3 922.6 153.8 950 153 C1000.0 151.6 1050.0 152.3 1100 151.5 C1153.0 150.6 1206.0 149.2 1259 148" fill="none" stroke="#dfe2e2" stroke-width="6.4" stroke-linejoin="round"/>
<path d="M868 279.8 C901.0 279.8 934.1 277.0 967 279.8 C980.4 280.9 992.2 290.1 1005.6 291.4 C1023.7 293.2 1041.8 288.9 1060 289 C1103.3 289.1 1146.7 291.4 1190 292 C1209.3 292.2 1228.7 291.6 1248 291.4 C1259.7 291.3 1271.3 291.1 1283 291" fill="none" stroke="#dfe2e2" stroke-width="6.4" stroke-linejoin="round"/>
<path d="M868 365.6 L949.4 365.6" fill="none" stroke="#dfe2e2" stroke-width="6.4" stroke-linejoin="round"/>
<path d="M959 382.5 L1136 381.5" fill="none" stroke="#dfe2e2" stroke-width="6.4" stroke-linejoin="round"/>
<path d="M868 413.3 C887.0 413.3 906.7 408.3 925 413.3 C933.5 415.6 933.4 431.5 942 433.4 C966.7 439.0 992.7 435.3 1018 434.4 C1022.6 434.2 1026.4 430.3 1031 430.2 C1108.3 428.9 1185.7 430.2 1263 430.2" fill="none" stroke="#dfe2e2" stroke-width="6.4" stroke-linejoin="round"/>
<path d="M868 505.5 C975.3 504.5 1082.7 503.9 1190 502.4 C1210.8 502.1 1231.7 501.0 1252.5 500.3" fill="none" stroke="#dfe2e2" stroke-width="6.4" stroke-linejoin="round"/>
<path d="M868 598.8 C975.3 598.8 1082.7 599.7 1190 598.8 C1208.7 598.6 1227.3 596.7 1246 595.6" fill="none" stroke="#dfe2e2" stroke-width="6.4" stroke-linejoin="round"/>
<path d="M868 648.6 L1150 648.6" fill="none" stroke="#dfe2e2" stroke-width="6.4" stroke-linejoin="round"/>
<path d="M1005.6 767.3 C1021.8 763.4 1038.2 760.3 1054.3 755.7 C1069.3 751.4 1083.4 743.4 1098.8 740.8 C1114.8 738.1 1131.3 740.1 1147.5 739.8" fill="none" stroke="#dfe2e2" stroke-width="6.4" stroke-linejoin="round"/>
<path d="M1147.5 740.8 C1163.3 740.9 1179.2 741.9 1195 741 C1208.7 740.3 1222.3 737.7 1236 736" fill="none" stroke="#dfe2e2" stroke-width="6.4" stroke-linejoin="round"/>
<path d="M868 829.8 C885.6 829.8 903.4 827.5 920.8 829.8 C925.3 830.4 926.9 838.1 931.4 838.3 C997.7 841.0 1064.2 838.3 1130.6 838.3" fill="none" stroke="#dfe2e2" stroke-width="6.4" stroke-linejoin="round"/>
<path d="M868 893.4 C935.0 890.9 1002.0 888.2 1069 886 C1087.3 885.4 1105.7 885.3 1124 885" fill="none" stroke="#dfe2e2" stroke-width="6.4" stroke-linejoin="round"/>
<path d="M868 935.8 L1211 933" fill="none" stroke="#dfe2e2" stroke-width="6.4" stroke-linejoin="round"/>
<path d="M868 1008.4 C915.3 1008.3 962.5 1008.1 1009.8 1008 C1075.2 1007.9 1140.6 1008.0 1206 1008" fill="none" stroke="#dfe2e2" stroke-width="6.4" stroke-linejoin="round"/>
<path d="M868 1099.5 C881.3 1097.3 894.5 1093.3 908 1093 C1002.0 1090.8 1096.0 1093.0 1190 1092 C1194.1 1092.0 1198.0 1090.7 1202 1090" fill="none" stroke="#dfe2e2" stroke-width="6.4" stroke-linejoin="round"/>
<path d="M868 1129 L944 1129" fill="none" stroke="#dfe2e2" stroke-width="6.4" stroke-linejoin="round"/>
<path d="M997 1185 C1004.1 1175.9 1007.7 1162.3 1018.3 1157.8 C1031.3 1152.2 1046.6 1157.3 1060.7 1157.8 C1078.4 1158.4 1095.9 1160.7 1113.6 1161 C1139.1 1161.4 1164.5 1160.3 1190 1160" fill="none" stroke="#dfe2e2" stroke-width="6.4" stroke-linejoin="round"/>
<path d="M1126 870 L1214.4 867.5" fill="none" stroke="#dfe2e2" stroke-width="6.4" stroke-linejoin="round"/>
<path d="M955 -5 C955.6 79.0 958.6 163.0 956.9 247 C956.7 254.4 949.7 260.6 949.4 268 C947.1 332.0 948.3 396.0 949.4 460 C949.5 463.5 952.9 466.5 953 470 C954.1 513.3 952.2 556.7 953 600 C953.6 633.4 955.6 666.7 957 700 C957.6 714.3 959.7 728.7 959 743 C958.6 752.3 955.9 761.4 953.7 770.5 C949.6 787.6 942.3 804.0 940 821.4 C937.4 841.0 939.4 860.9 938.9 880.7 C938.4 898.8 936.8 916.9 937 935 C938.1 1018.3 941.0 1101.7 943 1185" fill="none" stroke="#dfe2e2" stroke-width="6.4" stroke-linejoin="round"/>
<path d="M1001 -5 C1001.1 91.0 999.1 187.0 1001.4 283 C1001.5 286.5 1005.8 288.3 1008 291" fill="none" stroke="#dfe2e2" stroke-width="6.4" stroke-linejoin="round"/>
<path d="M997.1 334 C997.1 376.0 996.1 418.0 997.1 460 C997.2 463.5 1000.3 466.5 1000.3 470 C1001.3 546.7 999.8 623.3 1000.3 700 C1000.5 723.3 1001.7 746.7 1002.4 770" fill="none" stroke="#dfe2e2" stroke-width="6.4" stroke-linejoin="round"/>
<path d="M1109.4 930 C1109.8 965.3 1110.0 1000.7 1110.5 1036 C1110.7 1053.0 1111.0 1070.0 1111.6 1087 C1112.4 1109.5 1114.2 1132.0 1114.7 1154.6 C1114.9 1164.7 1114.0 1174.9 1113.6 1185" fill="none" stroke="#dfe2e2" stroke-width="6.4" stroke-linejoin="round"/>
<path d="M1318 -5 C1316.0 16.7 1313.2 38.3 1312 60 C1311.2 75.3 1312.4 90.7 1311.9 106 C1311.3 127.2 1311.2 148.5 1308.7 169.5 C1307.2 181.6 1303.3 193.3 1300 205 C1297.6 213.5 1293.4 221.4 1291.7 230 C1287.5 251.0 1285.4 272.4 1282.2 293.6 C1278.0 321.8 1273.5 350.0 1269.5 378.3 C1267.1 395.2 1265.1 412.1 1263 429 C1260.9 446.0 1258.9 463.0 1257 480 C1255.4 494.5 1254.0 509.1 1252.5 523.6 C1250.4 544.7 1248.1 565.8 1246.2 587 C1244.3 608.2 1242.5 629.4 1241 650.7 C1239.6 670.5 1238.9 690.2 1237.7 710 C1237.2 718.7 1236.6 727.3 1236 736" fill="none" stroke="#ffffff" stroke-width="4.8" stroke-linejoin="round"/>
<path d="M1214.4 867.5 C1213.3 888.3 1212.2 909.2 1211 930 C1209.7 953.3 1208.4 976.7 1207 1000 C1205.8 1020.0 1204.3 1040.0 1203 1060 C1201.7 1080.0 1200.0 1100.0 1199 1120 C1197.9 1141.7 1197.3 1163.3 1196.5 1185" fill="none" stroke="#ffffff" stroke-width="4.8" stroke-linejoin="round"/>
<path d="M955 10.6 C1033.3 10.6 1111.7 10.3 1190 10.6 C1220.3 10.7 1250.7 11.5 1281 12" fill="none" stroke="#ffffff" stroke-width="4.8" stroke-linejoin="round"/>
<path d="M868 70 C898.7 69.3 929.4 69.4 960 68 C973.4 67.4 986.9 66.8 1000 64 C1010.4 61.8 1019.6 55.4 1030 53 C1039.8 50.7 1050.0 49.8 1060 50 C1068.4 50.2 1076.7 52.7 1085 54 C1090.0 54.7 1095.0 56.0 1100 56 C1130.0 56.3 1160.0 55.7 1190 55 C1217.2 54.4 1244.4 53.0 1271.6 52" fill="none" stroke="#ffffff" stroke-width="4.8" stroke-linejoin="round"/>
<path d="M868 158 C895.3 156.3 922.6 153.8 950 153 C1000.0 151.6 1050.0 152.3 1100 151.5 C1153.0 150.6 1206.0 149.2 1259 148" fill="none" stroke="#ffffff" stroke-width="4.8" stroke-linejoin="round"/>
<path d="M868 279.8 C901.0 279.8 934.1 277.0 967 279.8 C980.4 280.9 992.2 290.1 1005.6 291.4 C1023.7 293.2 1041.8 288.9 1060 289 C1103.3 289.1 1146.7 291.4 1190 292 C1209.3 292.2 1228.7 291.6 1248 291.4 C1259.7 291.3 1271.3 291.1 1283 291" fill="none" stroke="#ffffff" stroke-width="4.8" stroke-linejoin="round"/>
<path d="M868 365.6 L949.4 365.6" fill="none" stroke="#ffffff" stroke-width="4.8" stroke-linejoin="round"/>
<path d="M959 382.5 L1136 381.5" fill="none" stroke="#ffffff" stroke-width="4.8" stroke-linejoin="round"/>
<path d="M868 413.3 C887.0 413.3 906.7 408.3 925 413.3 C933.5 415.6 933.4 431.5 942 433.4 C966.7 439.0 992.7 435.3 1018 434.4 C1022.6 434.2 1026.4 430.3 1031 430.2 C1108.3 428.9 1185.7 430.2 1263 430.2" fill="none" stroke="#ffffff" stroke-width="4.8" stroke-linejoin="round"/>
<path d="M868 505.5 C975.3 504.5 1082.7 503.9 1190 502.4 C1210.8 502.1 1231.7 501.0 1252.5 500.3" fill="none" stroke="#ffffff" stroke-width="4.8" stroke-linejoin="round"/>
<path d="M868 598.8 C975.3 598.8 1082.7 599.7 1190 598.8 C1208.7 598.6 1227.3 596.7 1246 595.6" fill="none" stroke="#ffffff" stroke-width="4.8" stroke-linejoin="round"/>
<path d="M868 648.6 L1150 648.6" fill="none" stroke="#ffffff" stroke-width="4.8" stroke-linejoin="round"/>
<path d="M1005.6 767.3 C1021.8 763.4 1038.2 760.3 1054.3 755.7 C1069.3 751.4 1083.4 743.4 1098.8 740.8 C1114.8 738.1 1131.3 740.1 1147.5 739.8" fill="none" stroke="#ffffff" stroke-width="4.8" stroke-linejoin="round"/>
<path d="M1147.5 740.8 C1163.3 740.9 1179.2 741.9 1195 741 C1208.7 740.3 1222.3 737.7 1236 736" fill="none" stroke="#ffffff" stroke-width="4.8" stroke-linejoin="round"/>
<path d="M868 829.8 C885.6 829.8 903.4 827.5 920.8 829.8 C925.3 830.4 926.9 838.1 931.4 838.3 C997.7 841.0 1064.2 838.3 1130.6 838.3" fill="none" stroke="#ffffff" stroke-width="4.8" stroke-linejoin="round"/>
<path d="M868 893.4 C935.0 890.9 1002.0 888.2 1069 886 C1087.3 885.4 1105.7 885.3 1124 885" fill="none" stroke="#ffffff" stroke-width="4.8" stroke-linejoin="round"/>
<path d="M868 935.8 L1211 933" fill="none" stroke="#ffffff" stroke-width="4.8" stroke-linejoin="round"/>
<path d="M868 1008.4 C915.3 1008.3 962.5 1008.1 1009.8 1008 C1075.2 1007.9 1140.6 1008.0 1206 1008" fill="none" stroke="#ffffff" stroke-width="4.8" stroke-linejoin="round"/>
<path d="M868 1099.5 C881.3 1097.3 894.5 1093.3 908 1093 C1002.0 1090.8 1096.0 1093.0 1190 1092 C1194.1 1092.0 1198.0 1090.7 1202 1090" fill="none" stroke="#ffffff" stroke-width="4.8" stroke-linejoin="round"/>
<path d="M868 1129 L944 1129" fill="none" stroke="#ffffff" stroke-width="4.8" stroke-linejoin="round"/>
<path d="M997 1185 C1004.1 1175.9 1007.7 1162.3 1018.3 1157.8 C1031.3 1152.2 1046.6 1157.3 1060.7 1157.8 C1078.4 1158.4 1095.9 1160.7 1113.6 1161 C1139.1 1161.4 1164.5 1160.3 1190 1160" fill="none" stroke="#ffffff" stroke-width="4.8" stroke-linejoin="round"/>
<path d="M1126 870 L1214.4 867.5" fill="none" stroke="#ffffff" stroke-width="4.8" stroke-linejoin="round"/>
<path d="M955 -5 C955.6 79.0 958.6 163.0 956.9 247 C956.7 254.4 949.7 260.6 949.4 268 C947.1 332.0 948.3 396.0 949.4 460 C949.5 463.5 952.9 466.5 953 470 C954.1 513.3 952.2 556.7 953 600 C953.6 633.4 955.6 666.7 957 700 C957.6 714.3 959.7 728.7 959 743 C958.6 752.3 955.9 761.4 953.7 770.5 C949.6 787.6 942.3 804.0 940 821.4 C937.4 841.0 939.4 860.9 938.9 880.7 C938.4 898.8 936.8 916.9 937 935 C938.1 1018.3 941.0 1101.7 943 1185" fill="none" stroke="#ffffff" stroke-width="4.8" stroke-linejoin="round"/>
<path d="M1001 -5 C1001.1 91.0 999.1 187.0 1001.4 283 C1001.5 286.5 1005.8 288.3 1008 291" fill="none" stroke="#ffffff" stroke-width="4.8" stroke-linejoin="round"/>
<path d="M997.1 334 C997.1 376.0 996.1 418.0 997.1 460 C997.2 463.5 1000.3 466.5 1000.3 470 C1001.3 546.7 999.8 623.3 1000.3 700 C1000.5 723.3 1001.7 746.7 1002.4 770" fill="none" stroke="#ffffff" stroke-width="4.8" stroke-linejoin="round"/>
<path d="M1109.4 930 C1109.8 965.3 1110.0 1000.7 1110.5 1036 C1110.7 1053.0 1111.0 1070.0 1111.6 1087 C1112.4 1109.5 1114.2 1132.0 1114.7 1154.6 C1114.9 1164.7 1114.0 1174.9 1113.6 1185" fill="none" stroke="#ffffff" stroke-width="4.8" stroke-linejoin="round"/>
<path d="M1052 -5 C1051.7 53.3 1049.3 111.7 1051 170 C1051.3 180.3 1056.0 189.9 1058 200 C1060.0 209.9 1063.8 219.9 1062.8 230 C1061.7 241.1 1057.5 252.1 1052 261.8 C1045.3 273.6 1035.0 282.9 1026.8 293.6 C1016.7 306.9 1007.3 320.7 997 333.8 C984.7 349.6 971.3 364.6 959 380.4 C948.7 393.6 938.9 407.0 929.3 420.7 C921.5 431.8 912.3 442.2 907 454.6 C903.7 462.4 904.1 471.5 904 480 C903.4 520.0 903.8 560.0 905 600 C905.5 616.7 908.1 633.3 909 650 C909.7 663.3 909.2 676.7 910 690 C911.3 711.2 914.4 732.3 915.5 753.6 C917.0 781.7 916.5 809.9 917.7 838 C919.0 868.7 921.6 899.3 923 930 C924.0 951.2 925.5 972.4 925 993.6 C924.8 1002.2 924.8 1011.4 920.8 1019 C913.2 1033.2 899.6 1043.3 891.2 1057 C884.7 1067.5 877.8 1078.7 876.4 1091 C872.8 1122.1 876.4 1153.7 876.4 1185" fill="none" stroke="#dcdfe0" stroke-width="9.2" stroke-linejoin="round"/>
<path d="M1211 -5 C1209.3 3.0 1208.0 11.1 1206 19 C1203.1 30.4 1199.3 41.6 1196.4 53 C1192.2 69.2 1188.6 85.5 1184.7 101.7 C1183.3 107.3 1180.9 112.8 1180.5 118.6 C1179.5 131.3 1182.4 144.2 1180.5 156.8 C1179.5 163.7 1175.8 170.0 1172 175.8 C1165.1 186.3 1152.6 193.5 1148.7 205.5 C1144.1 219.6 1147.8 235.2 1147.7 250 C1147.4 278.7 1148.7 307.4 1147.5 336 C1147.2 343.1 1146.6 350.7 1143.3 357 C1137.2 368.7 1128.0 378.5 1120 389 C1114.5 396.2 1106.0 401.5 1103 410 C1099.4 420.1 1102.8 431.5 1101 442 C1099.9 448.3 1097.0 454.1 1094.6 460 C1087.8 476.4 1080.6 492.5 1073.4 508.7 C1067.1 522.8 1059.8 536.5 1054.3 551 C1052.0 557.1 1050.2 563.5 1050 570 C1049.1 596.7 1050.3 623.3 1051 650 C1051.4 663.4 1052.9 676.6 1053.3 690 C1054.0 718.2 1054.0 746.5 1054.3 774.7 C1054.4 780.4 1053.2 786.1 1054.3 791.7 C1056.8 804.0 1061.6 815.7 1065 827.7 C1068.0 838.3 1072.3 848.6 1073.4 859.5 C1074.4 870.1 1072.4 880.7 1071.3 891.3 C1069.9 904.2 1068.1 917.1 1066 930 C1064.5 939.2 1062.4 948.3 1060.7 957.5 C1059.2 966.0 1056.4 974.4 1056.4 983 C1056.4 1000.7 1059.9 1018.3 1060.7 1036 C1061.7 1057.1 1061.1 1078.3 1061.7 1099.5 C1062.2 1117.9 1065.0 1136.3 1063.9 1154.6 C1063.3 1165.0 1058.9 1174.9 1056.4 1185" fill="none" stroke="#dcdfe0" stroke-width="9.2" stroke-linejoin="round"/>
<path d="M1285 -5 C1283.3 3.0 1281.8 11.0 1280 19 C1277.4 30.4 1273.4 41.5 1271.6 53 C1267.7 77.5 1266.1 102.4 1263 127 C1261.2 141.2 1258.4 155.3 1256.8 169.5 C1254.6 189.6 1253.2 209.8 1251.5 230 C1249.7 251.2 1249.0 272.5 1246.2 293.6 C1243.7 312.1 1240.4 330.6 1235.6 348.6 C1228.4 375.8 1219.9 402.6 1210.2 429 C1206.8 438.1 1199.1 445.3 1196.4 454.6 C1194.0 462.7 1194.5 471.6 1195.3 480 C1195.6 483.5 1197.9 486.6 1199.6 489.7 C1202.5 494.8 1208.1 498.7 1209 504.5 C1210.3 513.0 1207.9 521.7 1206 530 C1203.7 540.1 1199.0 549.6 1196.4 559.6 C1194.0 568.6 1192.8 577.9 1191 587 C1190.3 590.3 1189.7 593.7 1189 597" fill="none" stroke="#dcdfe0" stroke-width="9.2" stroke-linejoin="round"/>
<path d="M1189 597 C1175.0 597.3 1155.8 587.1 1147 598 C1136.1 611.5 1146.3 632.7 1146 650 C1145.8 663.3 1145.2 676.7 1145.4 690 C1145.7 711.2 1145.5 732.5 1147.5 753.6 C1148.3 762.3 1152.3 770.4 1153.9 779 C1155.2 785.9 1157.4 793.1 1156 800 C1154.4 807.8 1150.0 814.9 1145.4 821.4 C1140.8 827.9 1132.2 831.3 1128.5 838.3 C1125.2 844.6 1125.4 852.4 1125.3 859.5 C1124.7 886.3 1125.9 913.2 1126.4 940 C1126.8 960.0 1127.5 980.0 1128 1000 C1128.9 1040.2 1133.2 1080.5 1130.6 1120.7 C1129.8 1132.7 1121.3 1143.0 1117.9 1154.6 C1115.0 1164.5 1113.6 1174.9 1111.5 1185" fill="none" stroke="#dcdfe0" stroke-width="9.2" stroke-linejoin="round"/>
<path d="M868 735.5 C882.8 739.0 898.2 740.6 912.4 746.1 C926.7 751.7 938.0 763.9 952.6 768.4 C967.8 773.1 984.2 772.0 1000 773 C1018.1 774.1 1036.2 774.0 1054.3 774.7 C1086.8 776.0 1119.3 779.0 1151.8 779 C1156.9 779.0 1161.5 775.4 1166.6 774.7 C1172.7 773.9 1178.9 774.7 1185 774.7" fill="none" stroke="#dcdfe0" stroke-width="9.2" stroke-linejoin="round"/>
<path d="M1052 -5 C1051.7 53.3 1049.3 111.7 1051 170 C1051.3 180.3 1056.0 189.9 1058 200 C1060.0 209.9 1063.8 219.9 1062.8 230 C1061.7 241.1 1057.5 252.1 1052 261.8 C1045.3 273.6 1035.0 282.9 1026.8 293.6 C1016.7 306.9 1007.3 320.7 997 333.8 C984.7 349.6 971.3 364.6 959 380.4 C948.7 393.6 938.9 407.0 929.3 420.7 C921.5 431.8 912.3 442.2 907 454.6 C903.7 462.4 904.1 471.5 904 480 C903.4 520.0 903.8 560.0 905 600 C905.5 616.7 908.1 633.3 909 650 C909.7 663.3 909.2 676.7 910 690 C911.3 711.2 914.4 732.3 915.5 753.6 C917.0 781.7 916.5 809.9 917.7 838 C919.0 868.7 921.6 899.3 923 930 C924.0 951.2 925.5 972.4 925 993.6 C924.8 1002.2 924.8 1011.4 920.8 1019 C913.2 1033.2 899.6 1043.3 891.2 1057 C884.7 1067.5 877.8 1078.7 876.4 1091 C872.8 1122.1 876.4 1153.7 876.4 1185" fill="none" stroke="#ffffff" stroke-width="7.4" stroke-linejoin="round"/>
<path d="M1211 -5 C1209.3 3.0 1208.0 11.1 1206 19 C1203.1 30.4 1199.3 41.6 1196.4 53 C1192.2 69.2 1188.6 85.5 1184.7 101.7 C1183.3 107.3 1180.9 112.8 1180.5 118.6 C1179.5 131.3 1182.4 144.2 1180.5 156.8 C1179.5 163.7 1175.8 170.0 1172 175.8 C1165.1 186.3 1152.6 193.5 1148.7 205.5 C1144.1 219.6 1147.8 235.2 1147.7 250 C1147.4 278.7 1148.7 307.4 1147.5 336 C1147.2 343.1 1146.6 350.7 1143.3 357 C1137.2 368.7 1128.0 378.5 1120 389 C1114.5 396.2 1106.0 401.5 1103 410 C1099.4 420.1 1102.8 431.5 1101 442 C1099.9 448.3 1097.0 454.1 1094.6 460 C1087.8 476.4 1080.6 492.5 1073.4 508.7 C1067.1 522.8 1059.8 536.5 1054.3 551 C1052.0 557.1 1050.2 563.5 1050 570 C1049.1 596.7 1050.3 623.3 1051 650 C1051.4 663.4 1052.9 676.6 1053.3 690 C1054.0 718.2 1054.0 746.5 1054.3 774.7 C1054.4 780.4 1053.2 786.1 1054.3 791.7 C1056.8 804.0 1061.6 815.7 1065 827.7 C1068.0 838.3 1072.3 848.6 1073.4 859.5 C1074.4 870.1 1072.4 880.7 1071.3 891.3 C1069.9 904.2 1068.1 917.1 1066 930 C1064.5 939.2 1062.4 948.3 1060.7 957.5 C1059.2 966.0 1056.4 974.4 1056.4 983 C1056.4 1000.7 1059.9 1018.3 1060.7 1036 C1061.7 1057.1 1061.1 1078.3 1061.7 1099.5 C1062.2 1117.9 1065.0 1136.3 1063.9 1154.6 C1063.3 1165.0 1058.9 1174.9 1056.4 1185" fill="none" stroke="#ffffff" stroke-width="7.4" stroke-linejoin="round"/>
<path d="M1285 -5 C1283.3 3.0 1281.8 11.0 1280 19 C1277.4 30.4 1273.4 41.5 1271.6 53 C1267.7 77.5 1266.1 102.4 1263 127 C1261.2 141.2 1258.4 155.3 1256.8 169.5 C1254.6 189.6 1253.2 209.8 1251.5 230 C1249.7 251.2 1249.0 272.5 1246.2 293.6 C1243.7 312.1 1240.4 330.6 1235.6 348.6 C1228.4 375.8 1219.9 402.6 1210.2 429 C1206.8 438.1 1199.1 445.3 1196.4 454.6 C1194.0 462.7 1194.5 471.6 1195.3 480 C1195.6 483.5 1197.9 486.6 1199.6 489.7 C1202.5 494.8 1208.1 498.7 1209 504.5 C1210.3 513.0 1207.9 521.7 1206 530 C1203.7 540.1 1199.0 549.6 1196.4 559.6 C1194.0 568.6 1192.8 577.9 1191 587 C1190.3 590.3 1189.7 593.7 1189 597" fill="none" stroke="#ffffff" stroke-width="7.4" stroke-linejoin="round"/>
<path d="M1189 597 C1175.0 597.3 1155.8 587.1 1147 598 C1136.1 611.5 1146.3 632.7 1146 650 C1145.8 663.3 1145.2 676.7 1145.4 690 C1145.7 711.2 1145.5 732.5 1147.5 753.6 C1148.3 762.3 1152.3 770.4 1153.9 779 C1155.2 785.9 1157.4 793.1 1156 800 C1154.4 807.8 1150.0 814.9 1145.4 821.4 C1140.8 827.9 1132.2 831.3 1128.5 838.3 C1125.2 844.6 1125.4 852.4 1125.3 859.5 C1124.7 886.3 1125.9 913.2 1126.4 940 C1126.8 960.0 1127.5 980.0 1128 1000 C1128.9 1040.2 1133.2 1080.5 1130.6 1120.7 C1129.8 1132.7 1121.3 1143.0 1117.9 1154.6 C1115.0 1164.5 1113.6 1174.9 1111.5 1185" fill="none" stroke="#ffffff" stroke-width="7.4" stroke-linejoin="round"/>
<path d="M868 735.5 C882.8 739.0 898.2 740.6 912.4 746.1 C926.7 751.7 938.0 763.9 952.6 768.4 C967.8 773.1 984.2 772.0 1000 773 C1018.1 774.1 1036.2 774.0 1054.3 774.7 C1086.8 776.0 1119.3 779.0 1151.8 779 C1156.9 779.0 1161.5 775.4 1166.6 774.7 C1172.7 773.9 1178.9 774.7 1185 774.7" fill="none" stroke="#ffffff" stroke-width="7.4" stroke-linejoin="round"/>
<path d="M1052 -5 C1051.7 53.3 1049.3 111.7 1051 170 C1051.3 180.3 1056.0 189.9 1058 200 C1060.0 209.9 1063.8 219.9 1062.8 230 C1061.7 241.1 1057.5 252.1 1052 261.8 C1045.3 273.6 1035.0 282.9 1026.8 293.6 C1016.7 306.9 1007.3 320.7 997 333.8 C984.7 349.6 971.3 364.6 959 380.4 C948.7 393.6 938.9 407.0 929.3 420.7 C921.5 431.8 912.3 442.2 907 454.6 C903.7 462.4 904.1 471.5 904 480 C903.4 520.0 903.8 560.0 905 600 C905.5 616.7 908.1 633.3 909 650 C909.7 663.3 909.2 676.7 910 690 C911.3 711.2 914.4 732.3 915.5 753.6 C917.0 781.7 916.5 809.9 917.7 838 C919.0 868.7 921.6 899.3 923 930 C924.0 951.2 925.5 972.4 925 993.6 C924.8 1002.2 924.8 1011.4 920.8 1019 C913.2 1033.2 899.6 1043.3 891.2 1057 C884.7 1067.5 877.8 1078.7 876.4 1091 C872.8 1122.1 876.4 1153.7 876.4 1185" fill="none" stroke="#e6e8e8" stroke-width="1"/>
<path d="M1211 -5 C1209.3 3.0 1208.0 11.1 1206 19 C1203.1 30.4 1199.3 41.6 1196.4 53 C1192.2 69.2 1188.6 85.5 1184.7 101.7 C1183.3 107.3 1180.9 112.8 1180.5 118.6 C1179.5 131.3 1182.4 144.2 1180.5 156.8 C1179.5 163.7 1175.8 170.0 1172 175.8 C1165.1 186.3 1152.6 193.5 1148.7 205.5 C1144.1 219.6 1147.8 235.2 1147.7 250 C1147.4 278.7 1148.7 307.4 1147.5 336 C1147.2 343.1 1146.6 350.7 1143.3 357 C1137.2 368.7 1128.0 378.5 1120 389 C1114.5 396.2 1106.0 401.5 1103 410 C1099.4 420.1 1102.8 431.5 1101 442 C1099.9 448.3 1097.0 454.1 1094.6 460 C1087.8 476.4 1080.6 492.5 1073.4 508.7 C1067.1 522.8 1059.8 536.5 1054.3 551 C1052.0 557.1 1050.2 563.5 1050 570 C1049.1 596.7 1050.3 623.3 1051 650 C1051.4 663.4 1052.9 676.6 1053.3 690 C1054.0 718.2 1054.0 746.5 1054.3 774.7 C1054.4 780.4 1053.2 786.1 1054.3 791.7 C1056.8 804.0 1061.6 815.7 1065 827.7 C1068.0 838.3 1072.3 848.6 1073.4 859.5 C1074.4 870.1 1072.4 880.7 1071.3 891.3 C1069.9 904.2 1068.1 917.1 1066 930 C1064.5 939.2 1062.4 948.3 1060.7 957.5 C1059.2 966.0 1056.4 974.4 1056.4 983 C1056.4 1000.7 1059.9 1018.3 1060.7 1036 C1061.7 1057.1 1061.1 1078.3 1061.7 1099.5 C1062.2 1117.9 1065.0 1136.3 1063.9 1154.6 C1063.3 1165.0 1058.9 1174.9 1056.4 1185" fill="none" stroke="#e6e8e8" stroke-width="1"/>
<circle cx="1009.8" cy="1008" r="4.2" fill="#fff" stroke="#e2e4e4" stroke-width="1.4"/>
<circle cx="1214.4" cy="867.5" r="4.2" fill="#fff" stroke="#e2e4e4" stroke-width="1.4"/>
<path d="M950 1128.5L1100 1127L1190 1124.5" fill="none" stroke="#e8c4c8" stroke-width="1.6" stroke-dasharray="4 3"/>
<linearGradient id="le" x1="0" x2="1" y1="0" y2="0"><stop offset="0" stop-color="#0f172a" stop-opacity=".06"/><stop offset="1" stop-color="#0f172a" stop-opacity="0"/></linearGradient><rect x="872" y="0" width="26" height="1180" fill="url(#le)"/>
<g font-family="Liberation Sans, sans-serif" font-weight="400" fill="#fff" stroke="#ffffff" stroke-opacity=".9" stroke-width="4.2" stroke-linejoin="round">
<text x="1169" y="17" font-size="20.5" textLength="172.5" lengthAdjust="spacingAndGlyphs">Deerfield Beach</text>
<text x="1230.3" y="145" font-size="20.5" textLength="121.9" lengthAdjust="spacingAndGlyphs">Lighthouse</text>
<text x="1262.7" y="167.4" font-size="20.5" textLength="57.6" lengthAdjust="spacingAndGlyphs">Point</text>
<text x="943" y="233" font-size="20.5" textLength="161" lengthAdjust="spacingAndGlyphs">Coconut Creek</text>
<text x="1113.1" y="266.4" font-size="24" textLength="137.9" lengthAdjust="spacingAndGlyphs">POMPANO</text>
<text x="1136.4" y="293.6" font-size="24" textLength="90.3" lengthAdjust="spacingAndGlyphs">BEACH</text>
<text x="1087.2" y="491.8" font-size="20.5" textLength="146.7" lengthAdjust="spacingAndGlyphs">Oakland Park</text>
<text x="871" y="595.2" font-size="20.5" textLength="107" lengthAdjust="spacingAndGlyphs">Lauderhill</text>
<text x="817" y="635.8" font-size="20.5" textLength="105.5" lengthAdjust="spacingAndGlyphs">Plantation</text>
<text x="991.8" y="656" font-size="25.2" textLength="273" lengthAdjust="spacingAndGlyphs">FORT LAUDERDALE</text>
<text x="842" y="845.7" font-size="20.5" textLength="54.5" lengthAdjust="spacingAndGlyphs">Davie</text>
<text x="1058.1" y="879.2" font-size="20.5" textLength="136.2" lengthAdjust="spacingAndGlyphs">Dania Beach</text>
<text x="1023" y="1015.2" font-size="23.5" textLength="173" lengthAdjust="spacingAndGlyphs">HOLLYWOOD</text>
<text x="818" y="1090.4" font-size="20.5" textLength="97" lengthAdjust="spacingAndGlyphs">Miramar</text>
<text x="1054.3" y="1099.5" font-size="20.5" textLength="117.6" lengthAdjust="spacingAndGlyphs">Hallandale</text>
<text x="1079.3" y="1121.7" font-size="20.5" textLength="67.2" lengthAdjust="spacingAndGlyphs">Beach</text>
<text x="1092.5" y="1192.5" font-size="20.5" textLength="95.5" lengthAdjust="spacingAndGlyphs">Aventura</text>
<text x="808.6" y="44" font-size="20.5" textLength="93" lengthAdjust="spacingAndGlyphs">Parkland</text>
</g>
<g font-family="Liberation Sans, sans-serif" font-weight="400" fill="#8595a8" stroke="#8595a8" stroke-width="1.05" stroke-linejoin="round">
<text x="1169" y="17" font-size="20.5" textLength="172.5" lengthAdjust="spacingAndGlyphs">Deerfield Beach</text>
<text x="1230.3" y="145" font-size="20.5" textLength="121.9" lengthAdjust="spacingAndGlyphs">Lighthouse</text>
<text x="1262.7" y="167.4" font-size="20.5" textLength="57.6" lengthAdjust="spacingAndGlyphs">Point</text>
<text x="943" y="233" font-size="20.5" textLength="161" lengthAdjust="spacingAndGlyphs">Coconut Creek</text>
<text x="1113.1" y="266.4" font-size="24" textLength="137.9" lengthAdjust="spacingAndGlyphs">POMPANO</text>
<text x="1136.4" y="293.6" font-size="24" textLength="90.3" lengthAdjust="spacingAndGlyphs">BEACH</text>
<text x="1087.2" y="491.8" font-size="20.5" textLength="146.7" lengthAdjust="spacingAndGlyphs">Oakland Park</text>
<text x="871" y="595.2" font-size="20.5" textLength="107" lengthAdjust="spacingAndGlyphs">Lauderhill</text>
<text x="817" y="635.8" font-size="20.5" textLength="105.5" lengthAdjust="spacingAndGlyphs">Plantation</text>
<text x="991.8" y="656" font-size="25.2" textLength="273" lengthAdjust="spacingAndGlyphs">FORT LAUDERDALE</text>
<text x="842" y="845.7" font-size="20.5" textLength="54.5" lengthAdjust="spacingAndGlyphs">Davie</text>
<text x="1058.1" y="879.2" font-size="20.5" textLength="136.2" lengthAdjust="spacingAndGlyphs">Dania Beach</text>
<text x="1023" y="1015.2" font-size="23.5" textLength="173" lengthAdjust="spacingAndGlyphs">HOLLYWOOD</text>
<text x="818" y="1090.4" font-size="20.5" textLength="97" lengthAdjust="spacingAndGlyphs">Miramar</text>
<text x="1054.3" y="1099.5" font-size="20.5" textLength="117.6" lengthAdjust="spacingAndGlyphs">Hallandale</text>
<text x="1079.3" y="1121.7" font-size="20.5" textLength="67.2" lengthAdjust="spacingAndGlyphs">Beach</text>
<text x="1092.5" y="1192.5" font-size="20.5" textLength="95.5" lengthAdjust="spacingAndGlyphs">Aventura</text>
<text x="808.6" y="44" font-size="20.5" textLength="93" lengthAdjust="spacingAndGlyphs">Parkland</text>
</g>
<circle cx="1121.8" cy="601.5" r="46.5" fill="rgba(251,191,36,.03)" stroke="#fbbf24" stroke-opacity="0.17" stroke-width="5"/>
<circle cx="1115.3" cy="647.8" r="46.5" fill="rgba(251,191,36,.03)" stroke="#fbbf24" stroke-opacity="0.17" stroke-width="5"/>
<circle cx="1140" cy="653.7" r="46.5" fill="rgba(251,191,36,.03)" stroke="#fbbf24" stroke-opacity="0.17" stroke-width="5"/>
<circle cx="1210.3" cy="714.3" r="46.5" fill="rgba(251,191,36,.03)" stroke="#fbbf24" stroke-opacity="0.136" stroke-width="5"/>
<circle cx="1208" cy="1005.8" r="46.5" fill="rgba(251,191,36,.03)" stroke="#fbbf24" stroke-opacity="0.17" stroke-width="5"/>
<circle cx="1254" cy="378.3" r="46.5" fill="rgba(251,191,36,.03)" stroke="#fbbf24" stroke-opacity="0.0765" stroke-width="5"/>
<g opacity="1"><circle cx="1121.8" cy="604.5" r="22" fill="#000" opacity=".28" filter="url(#sh)"/><circle cx="1121.8" cy="601.5" r="27.6" fill="#dc2626" fill-opacity=".3"/><circle cx="1121.8" cy="601.5" r="21.8" fill="#fbbf24"/><circle cx="1121.8" cy="601.5" r="17" fill="url(#gR)"/></g>
<circle cx="1064" cy="213.5" r="25" fill="#64748b" fill-opacity=".07" stroke="#64748b" stroke-opacity=".42" stroke-width="2.6" stroke-dasharray="6.5 4.5"/>
<circle cx="1137" cy="231" r="25" fill="#64748b" fill-opacity=".07" stroke="#64748b" stroke-opacity=".42" stroke-width="2.6" stroke-dasharray="6.5 4.5"/>
<circle cx="1288.6" cy="279.8" r="25" fill="#64748b" fill-opacity=".07" stroke="#64748b" stroke-opacity=".42" stroke-width="2.6" stroke-dasharray="6.5 4.5"/>
<circle cx="1260.4" cy="506" r="25" fill="#64748b" fill-opacity=".07" stroke="#64748b" stroke-opacity=".42" stroke-width="2.6" stroke-dasharray="6.5 4.5"/>
<circle cx="1147" cy="650" r="46.6" fill="#64748b" fill-opacity=".07" stroke="#64748b" stroke-opacity=".42" stroke-width="2.6" stroke-dasharray="6.5 4.5"/>
<circle cx="1108" cy="701.5" r="25" fill="#64748b" fill-opacity=".07" stroke="#64748b" stroke-opacity=".42" stroke-width="2.6" stroke-dasharray="6.5 4.5"/>
<circle cx="1108.3" cy="1003.7" r="25" fill="#64748b" fill-opacity=".07" stroke="#64748b" stroke-opacity=".42" stroke-width="2.6" stroke-dasharray="6.5 4.5"/>
<circle cx="1210" cy="993.6" r="25" fill="#64748b" fill-opacity=".07" stroke="#64748b" stroke-opacity=".42" stroke-width="2.6" stroke-dasharray="6.5 4.5"/>
<g opacity="0.45"><circle cx="1254" cy="381.3" r="22" fill="#000" opacity=".28" filter="url(#sh)"/><circle cx="1254" cy="378.3" r="27.6" fill="#dc2626" fill-opacity=".3"/><circle cx="1254" cy="378.3" r="21.8" fill="#fbbf24"/><circle cx="1254" cy="378.3" r="17" fill="url(#gR)"/></g>
<g opacity="0.5"><circle cx="1050" cy="369.7" r="17" fill="#10b981" opacity=".45" filter="url(#gl)"/><circle cx="1050" cy="367.7" r="15.6" fill="#fff" fill-opacity=".82"/><circle cx="1050" cy="367.7" r="12" fill="url(#gG)"/></g>
<g opacity="0.4"><circle cx="1196" cy="601.8" r="17" fill="#6366f1" opacity=".45" filter="url(#gl)"/><circle cx="1196" cy="599.8" r="15.6" fill="#fff" fill-opacity=".82"/><circle cx="1196" cy="599.8" r="12" fill="url(#gP)"/></g>
<g opacity="0.5"><circle cx="1181.8" cy="719.7" r="17" fill="#10b981" opacity=".45" filter="url(#gl)"/><circle cx="1181.8" cy="717.7" r="15.6" fill="#fff" fill-opacity=".82"/><circle cx="1181.8" cy="717.7" r="12" fill="url(#gG)"/></g>
<g opacity="1"><circle cx="1079.7" cy="157.7" r="17" fill="#6366f1" opacity=".45" filter="url(#gl)"/><circle cx="1079.7" cy="155.7" r="15.6" fill="#fff" fill-opacity=".82"/><circle cx="1079.7" cy="155.7" r="12" fill="url(#gP)"/></g>
<g opacity="1"><circle cx="1268" cy="291.3" r="17" fill="#6366f1" opacity=".45" filter="url(#gl)"/><circle cx="1268" cy="289.3" r="15.6" fill="#fff" fill-opacity=".82"/><circle cx="1268" cy="289.3" r="12" fill="url(#gP)"/></g>
<g opacity="1"><circle cx="1280" cy="311.5" r="17" fill="#6366f1" opacity=".45" filter="url(#gl)"/><circle cx="1280" cy="309.5" r="15.6" fill="#fff" fill-opacity=".82"/><circle cx="1280" cy="309.5" r="12" fill="url(#gP)"/></g>
<g opacity="1"><circle cx="1281.8" cy="319.5" r="17" fill="#6366f1" opacity=".45" filter="url(#gl)"/><circle cx="1281.8" cy="317.5" r="15.6" fill="#fff" fill-opacity=".82"/><circle cx="1281.8" cy="317.5" r="12" fill="url(#gP)"/></g>
<g opacity="1"><circle cx="1209.8" cy="574" r="17" fill="#8b5cf6" opacity=".45" filter="url(#gl)"/><circle cx="1209.8" cy="572" r="15.6" fill="#fff" fill-opacity=".82"/><circle cx="1209.8" cy="572" r="12" fill="url(#gC)"/></g>
<g opacity="0.78"><circle cx="1210.3" cy="717.3" r="22" fill="#000" opacity=".28" filter="url(#sh)"/><circle cx="1210.3" cy="714.3" r="27.6" fill="#dc2626" fill-opacity=".3"/><circle cx="1210.3" cy="714.3" r="21.8" fill="#fbbf24"/><circle cx="1210.3" cy="714.3" r="17" fill="url(#gR)"/></g>
<g opacity="1"><circle cx="1115.3" cy="650.8" r="22" fill="#000" opacity=".28" filter="url(#sh)"/><circle cx="1115.3" cy="647.8" r="27.6" fill="#dc2626" fill-opacity=".3"/><circle cx="1115.3" cy="647.8" r="21.8" fill="#fbbf24"/><circle cx="1115.3" cy="647.8" r="17" fill="url(#gR)"/></g>
<g opacity="1"><circle cx="1140" cy="656.7" r="22" fill="#000" opacity=".28" filter="url(#sh)"/><circle cx="1140" cy="653.7" r="27.6" fill="#dc2626" fill-opacity=".3"/><circle cx="1140" cy="653.7" r="21.8" fill="#fbbf24"/><circle cx="1140" cy="653.7" r="17" fill="url(#gR)"/></g>
<g opacity="1"><circle cx="1208" cy="1008.8" r="22" fill="#000" opacity=".28" filter="url(#sh)"/><circle cx="1208" cy="1005.8" r="27.6" fill="#dc2626" fill-opacity=".3"/><circle cx="1208" cy="1005.8" r="21.8" fill="#fbbf24"/><circle cx="1208" cy="1005.8" r="17" fill="url(#gR)"/></g>
<g opacity="1"><circle cx="1137.6" cy="661.9" r="17" fill="#10b981" opacity=".45" filter="url(#gl)"/><circle cx="1137.6" cy="659.9" r="15.6" fill="#fff" fill-opacity=".82"/><circle cx="1137.6" cy="659.9" r="12" fill="url(#gG)"/></g>
<g opacity="1"><circle cx="1125.9" cy="703.5" r="17" fill="#10b981" opacity=".45" filter="url(#gl)"/><circle cx="1125.9" cy="701.5" r="15.6" fill="#fff" fill-opacity=".82"/><circle cx="1125.9" cy="701.5" r="12" fill="url(#gG)"/></g>
<g opacity="1"><circle cx="1049.9" cy="979.7" r="17" fill="#10b981" opacity=".45" filter="url(#gl)"/><circle cx="1049.9" cy="977.7" r="15.6" fill="#fff" fill-opacity=".82"/><circle cx="1049.9" cy="977.7" r="12" fill="url(#gG)"/></g>
</svg>
<div style="position:absolute;left:20px;top:12px;width:72px;height:144px;border-radius:18px;background:rgba(255,255,255,.94);box-shadow:0 2px 10px rgba(15,23,42,.06)"></div>
<svg style="position:absolute;left:20px;top:12px" width="72" height="144" viewBox="0 0 72 144"><path d="M27 39.3H47M37 29.3V49.3M27 111H47" stroke="#2a3a53" stroke-width="4" fill="none"/></svg>
</div>
</body>
</html>
